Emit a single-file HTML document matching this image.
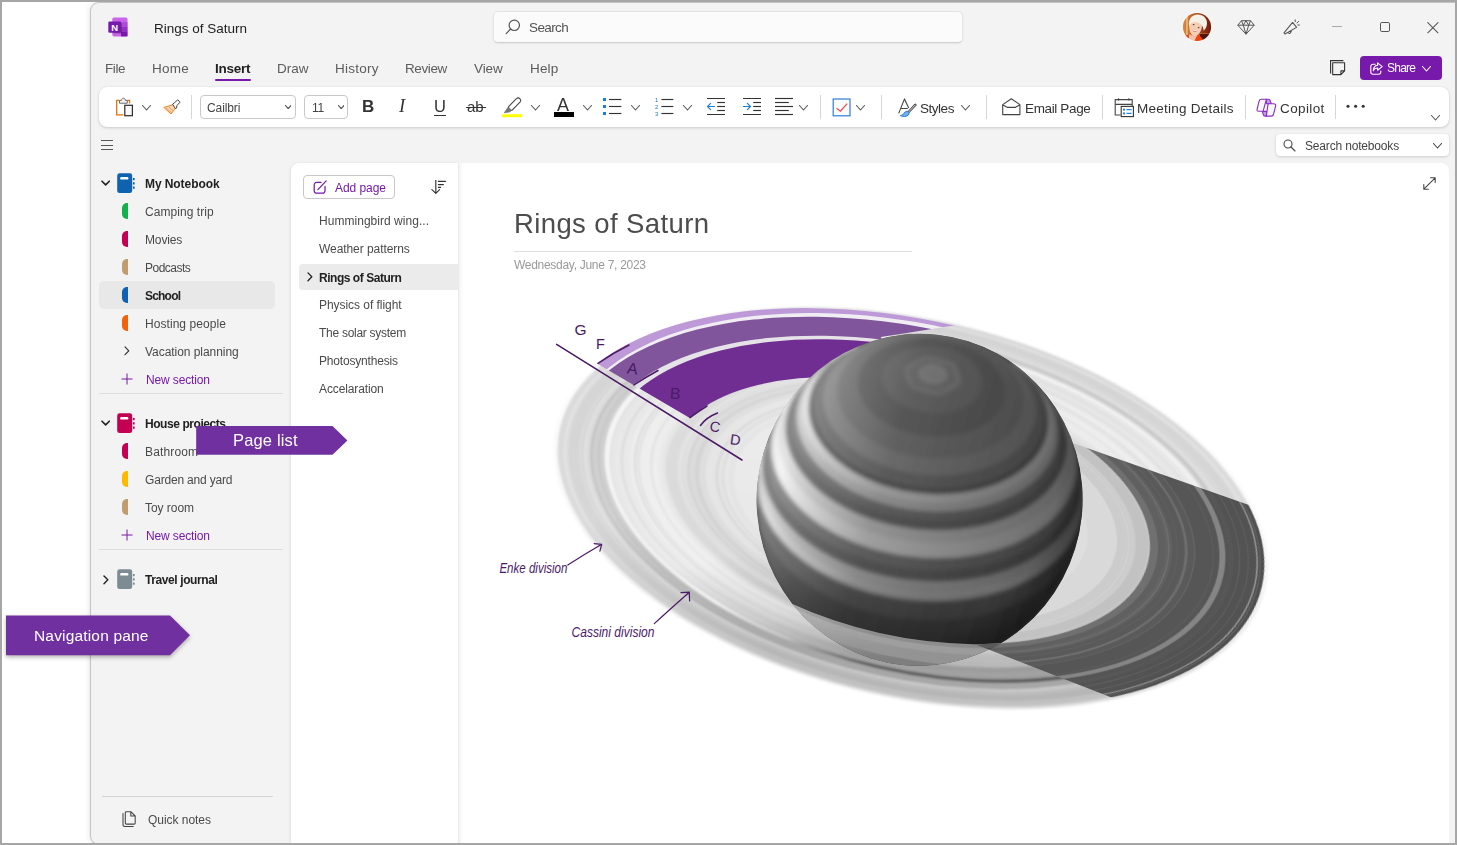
<!DOCTYPE html>
<html lang="en"><head><meta charset="utf-8"><title>Rings of Saturn - OneNote</title>
<style>
html,body{margin:0;padding:0}
html{width:1457px;height:845px;overflow:hidden}
body{width:1457px;height:845px;position:relative;overflow:hidden;background:#fff;font-family:'Liberation Sans',sans-serif}
.a{position:absolute;display:block}
.t{position:absolute;white-space:nowrap;display:block;will-change:transform}
#frame{left:0;top:0;width:1457px;height:845px;box-sizing:border-box;border-style:solid;border-color:#a6a6a6;border-width:2px 2px 2px 2px;z-index:50;pointer-events:none}
#win{left:91px;top:2.5px;width:1365px;height:841px;background:#f3f3f3;border-radius:8px 0 0 8px;box-shadow:0 0 0 1px #c4c4c4, 0 0 6px rgba(0,0,0,.18)}
#ribbon{left:99px;top:87px;width:1350px;height:40px;background:#fff;border-radius:8px;box-shadow:0 1px 3px rgba(0,0,0,.16),0 0 1px rgba(0,0,0,.12)}
#search{left:493px;top:10.6px;width:470px;height:32px;box-sizing:border-box;background:#fbfbfb;border:1px solid #e3e3e3;border-bottom-color:#d0d0d0;border-radius:5px;box-shadow:0 1px 2px rgba(0,0,0,.06)}
#share{left:1360px;top:56px;width:82px;height:24px;background:#7719aa;border-radius:4px}
.box{box-sizing:border-box;border:1px solid #c8c8c8;border-radius:4px;background:#fff}
#pagelist{left:291px;top:163px;width:167.3px;height:680px;background:#fff;border-radius:8px 0 0 0;box-shadow:-1px 0 3px rgba(0,0,0,.08)}
#canvas{left:458px;top:163px;width:991px;height:680px;background:linear-gradient(to right,#e9e9e9 0,#f4f4f4 1.5px,#fbfbfb 3.5px,#fff 6px);border-radius:0 8px 0 0}
.sel{background:#e8e8e8}
.tab{left:0;top:0;width:6.4px;height:16px;border-radius:5px 0 0 5px}
</style></head><body>

<div class="a" id="win"></div>
<header id="titlebar">
<svg class="a" style="left:107.5px;top:17px" width="20" height="20" viewBox="0 0 20 20"><rect x="4.3" y="0.4" width="15.2" height="19" rx="1.6" fill="#ca64ea"/>
<rect x="13" y="5.2" width="6.5" height="4.8" fill="#ae4bd5"/><rect x="13" y="10" width="6.5" height="4.8" fill="#9332bf"/><rect x="13" y="14.8" width="6.5" height="4.6" fill="#7719aa"/>
<rect x="5.3" y="5.5" width="8.5" height="11" rx="1" fill="#000" opacity=".25"/>
<rect x="0.3" y="4.5" width="12.8" height="11.3" rx="1.3" fill="#7719aa"/>
<text x="6.7" y="13.6" font-family="Liberation Sans,sans-serif" font-weight="700" font-size="9.5" fill="#fff" text-anchor="middle">N</text></svg>
<span class="t " style="left:154.2px;top:22.0px;font:400 13.5px/1 'Liberation Sans',sans-serif;color:#222;letter-spacing:-0.004px;">Rings of Saturn</span>
<div class="a" id="search"></div>
<svg class="a" style="left:505px;top:19px" width="17" height="16" viewBox="0 0 17 16"><circle cx="9.3" cy="6.3" r="5.2" fill="none" stroke="#555" stroke-width="1.2"/><path d="M5.6 10 L1.2 14.6" stroke="#555" stroke-width="1.2" stroke-linecap="round"/></svg>
<span class="t " style="left:529.2px;top:21.0px;font:400 13.5px/1 'Liberation Sans',sans-serif;color:#555;letter-spacing:-0.614px;">Search</span>
<svg class="a" style="left:1182px;top:11.8px" width="30" height="30" viewBox="0 0 30 30"><defs><clipPath id="av"><circle cx="15" cy="15" r="14.1"/></clipPath><filter id="avb" x="-10%" y="-10%" width="120%" height="120%"><feGaussianBlur stdDeviation=".55"/></filter>
<linearGradient id="avbg" x1="0" y1="0" x2="1" y2="0"><stop offset="0" stop-color="#d98c4a"/><stop offset=".3" stop-color="#c66a2a"/><stop offset=".62" stop-color="#a03c18"/><stop offset="1" stop-color="#6e180c"/></linearGradient></defs>
<circle cx="15" cy="15" r="14.8" fill="#fff" opacity=".9"/>
<g clip-path="url(#av)"><g filter="url(#avb)"><rect width="30" height="30" fill="url(#avbg)"/>
<rect x="4.2" y="3" width="1.5" height="20" fill="#efc47a"/><rect x="16" y="21.6" width="11" height="1.3" fill="#e89a3a"/>
<path d="M17 22 L30 22 L30 30 L14 30 Z" fill="#4e1208"/>
<path d="M7.2 22 C9 24 13 23.5 15.5 21.5 L18 23 L13 30 L6.5 30 Z" fill="#f0c4aa"/>
<path d="M3 23.5 L7 22.5 L7 30 L3 30 Z" fill="#f4430f"/><path d="M16 21.5 L21 27.5 L20 30 L12 30 Z" fill="#f4430f"/>
<path d="M7 13 C6 8 10 5.5 14 6.5 C19 7.5 21 12 19.5 17 C18.5 21 15 24.5 11.5 23.8 C8.5 23 7.2 18 7 13 Z" fill="#f3cdb6"/>
<path d="M10.6 18 C12.2 19.4 14 19.4 15.2 18.6 C14.4 20.4 11.6 20.6 10.6 18 Z" fill="#c4485a"/><path d="M11 18.2 C12.4 19 13.8 19 14.8 18.6" stroke="#fff" stroke-width=".7" fill="none"/>
<ellipse cx="11.6" cy="12.6" rx="1" ry=".7" fill="#5a4034"/><ellipse cx="16.6" cy="15.6" rx="1" ry=".7" fill="#5a4034"/>
<path d="M7 13.5 C6.5 8 9 3.2 15 2.6 C21 2.2 25.5 6.5 25 12 C24.7 15 23.2 17.4 21.6 18.4 C21.4 15 19.6 12 16.4 10.6 C13.4 9.4 10 10 7 13.5 Z" fill="#f4f1e8"/></g></g></svg>
<svg class="a" style="left:1236.5px;top:20px" width="18" height="15" viewBox="0 0 18 15"><path d="M4.5 0.7 H13.5 L17.2 5.2 L9 14.2 L0.8 5.2 Z M0.8 5.2 H17.2 M4.5 0.7 L6.3 5.2 L9 14.2 L11.7 5.2 L13.5 0.7 M6.3 5.2 L9 0.7 L11.7 5.2" fill="none" stroke="#555" stroke-width="1" stroke-linejoin="round"/></svg>
<svg class="a" style="left:1283px;top:18.5px" width="17" height="17" viewBox="0 0 17 17"><path d="M9.6 3.4 L13.6 8.4 L2 15 L1 13.8 Z M5 13.4 C5.6 15 7.6 15.2 8.6 11.4" fill="none" stroke="#555" stroke-width="1.05" stroke-linejoin="round"/><path d="M12.2 2.6 V0.8 M14 4 L15.6 2.4 M14.8 6 H16.4" stroke="#555" stroke-width="1" stroke-linecap="round"/></svg>
<div class="a" style="left:1332px;top:25.8px;width:10px;height:1.2px;background:#aaa"></div>
<div class="a" style="left:1380px;top:22px;width:10px;height:10px;box-sizing:border-box;border:1.1px solid #555;border-radius:1.8px"></div>
<svg class="a" style="left:1427px;top:21.5px" width="12" height="12" viewBox="0 0 12 12"><path d="M0.8 0.6 L11 10.8 M11 0.6 L0.8 10.8" stroke="#555" stroke-width="1.05" stroke-linecap="round"/></svg>
</header><div id="tabs" role="tablist">
<span class="t " style="left:104.8px;top:62.0px;font:400 13.5px/1 'Liberation Sans',sans-serif;color:#5c5c5c;letter-spacing:-0.383px;">File</span>
<span class="t " style="left:152.1px;top:62.0px;font:400 13.5px/1 'Liberation Sans',sans-serif;color:#5c5c5c;letter-spacing:0.227px;">Home</span>
<span class="t " style="left:214.9px;top:62.0px;font:700 13.5px/1 'Liberation Sans',sans-serif;color:#222;letter-spacing:-0.232px;">Insert</span>
<span class="t " style="left:276.7px;top:62.0px;font:400 13.5px/1 'Liberation Sans',sans-serif;color:#5c5c5c;letter-spacing:-0.012px;">Draw</span>
<span class="t " style="left:334.8px;top:62.0px;font:400 13.5px/1 'Liberation Sans',sans-serif;color:#5c5c5c;letter-spacing:0.234px;">History</span>
<span class="t " style="left:404.6px;top:62.0px;font:400 13.5px/1 'Liberation Sans',sans-serif;color:#5c5c5c;letter-spacing:-0.381px;">Review</span>
<span class="t " style="left:473.8px;top:62.0px;font:400 13.5px/1 'Liberation Sans',sans-serif;color:#5c5c5c;letter-spacing:-0.084px;">View</span>
<span class="t " style="left:529.8px;top:62.0px;font:400 13.5px/1 'Liberation Sans',sans-serif;color:#5c5c5c;letter-spacing:0.143px;">Help</span>
<div class="a" style="left:215.4px;top:78.7px;width:36px;height:2.2px;background:#7719aa;border-radius:1.1px"></div>
<svg class="a" style="left:1330px;top:59.5px" width="16" height="16" viewBox="0 0 16 16"><path d="M0.6 13.4 V0.6 H13.4" fill="none" stroke="#333" stroke-width="1.1"/><path d="M2.7 2.8 H14.6 V10.9 L10.9 14.6 H2.7 Z M14.6 10.9 H10.9 V14.6" fill="#f3f3f3" stroke="#333" stroke-width="1.1" stroke-linejoin="round"/></svg>
<div class="a" id="share"></div>
<svg class="a" style="left:1369.5px;top:61.5px" width="13" height="13" viewBox="0 0 13 13"><path d="M5.2 2.2 H3 A2.2 2.2 0 0 0 0.8 4.4 V10 A2.2 2.2 0 0 0 3 12.2 H8.6 A2.2 2.2 0 0 0 10.8 10 V9" fill="none" stroke="#fff" stroke-width="1.1" stroke-linecap="round"/><path d="M7.6 0.9 L12.2 4.6 L7.6 8.2 V6 C5.4 6 4 7 3.2 8.8 C3.4 5.4 5 3.4 7.6 3.2 Z" fill="none" stroke="#fff" stroke-width="1.1" stroke-linejoin="round"/></svg>
<span class="t " style="left:1387.4px;top:62.4px;font:400 12px/1 'Liberation Sans',sans-serif;color:#fff;letter-spacing:-0.754px;">Share</span>
<svg class="a" style="left:1422px;top:65.7px" width="9" height="6" viewBox="0 0 9 6"><path d="M0.5 0.5 L4.5 5 L8.5 0.5" fill="none" stroke="#fff" stroke-width="1.1" stroke-linecap="round" stroke-linejoin="round"/></svg>
</div><div id="ribbonbar" role="toolbar">
<div class="a" id="ribbon"></div>
<svg class="a" style="left:115px;top:97.4px" width="19" height="20.6" viewBox="0 0 19 20.6"><path d="M4.4 3.3 H1.7 V17.9 H8.4" fill="none" stroke="#e1730c" stroke-width="1.3"/><path d="M12.4 3.3 H14.6 V6.6" fill="none" stroke="#e1730c" stroke-width="1.3"/><path d="M4.5 6.2 V3.4 H6.5 C6.7 0.5 10.1 0.5 10.3 3.4 H12.3 V6.2 Z" fill="#f8f8f8" stroke="#666" stroke-width="1"/><rect x="9.8" y="8.3" width="7.6" height="10.4" fill="#fafafa" stroke="#333" stroke-width="1.25"/></svg>
<svg class="a" style="left:141.9px;top:105px" width="9" height="6" viewBox="0 0 9 6"><path d="M0.5 0.5 L4.5 5 L8.5 0.5" fill="none" stroke="#555" stroke-width="1.1" stroke-linecap="round" stroke-linejoin="round"/></svg>
<svg class="a" style="left:163px;top:99px" width="18" height="16" viewBox="0 0 18 16"><path d="M0.8 8.4 L10.4 5.6 L12.6 9 L8 15 Z" fill="#fbd9b5" stroke="#e8852b" stroke-width="1" stroke-linejoin="round"/><path d="M3 9 L9 14 M6 8 L10.4 11.8" stroke="#e8852b" stroke-width=".7"/><path d="M9.6 5.2 L11.4 3.8 L14.8 0.8 L17 3.2 L14 6.4 L13.6 9 L12.4 9.6 Z" fill="#fff" stroke="#444" stroke-width="1" stroke-linejoin="round"/></svg>
<div class="a" style="left:190.9px;top:95px;width:1px;height:23.5px;background:#d6d6d6"></div>
<div class="a box" style="left:200px;top:95px;width:96px;height:23.5px"></div>
<span class="t " style="left:207.3px;top:102.0px;font:400 12px/1 'Liberation Sans',sans-serif;color:#444;letter-spacing:-0.101px;">Cailbri</span>
<svg class="a" style="left:285px;top:104.5px" width="6.4" height="4.6" viewBox="0 0 6.4 4.6"><path d="M0.5 0.5 L3.2 3.6 L5.9 0.5" fill="none" stroke="#444" stroke-width="1.1" stroke-linecap="round" stroke-linejoin="round"/></svg>
<div class="a box" style="left:304px;top:95px;width:44px;height:23.5px"></div>
<span class="t " style="left:312.3px;top:102.0px;font:400 12px/1 'Liberation Sans',sans-serif;color:#444;letter-spacing:-0.4px;">11</span>
<svg class="a" style="left:338px;top:104.5px" width="6.4" height="4.6" viewBox="0 0 6.4 4.6"><path d="M0.5 0.5 L3.2 3.6 L5.9 0.5" fill="none" stroke="#444" stroke-width="1.1" stroke-linecap="round" stroke-linejoin="round"/></svg>
<span class="t " style="left:361.9px;top:98.3px;font:700 17px/1 'Liberation Sans',sans-serif;color:#333;">B</span>
<span class="t " style="left:399.1px;top:97.4px;font:italic 400 18.5px/1 'Liberation Serif',serif;color:#333;">I</span>
<span class="t " style="left:433.7px;top:97.6px;font:400 16.5px/1 'Liberation Sans',sans-serif;color:#333;">U</span>
<div class="a" style="left:434px;top:115px;width:12px;height:1.1px;background:#333"></div>
<span class="t " style="left:467.0px;top:99.4px;font:400 15px/1 'Liberation Sans',sans-serif;color:#333;">ab</span>
<div class="a" style="left:466px;top:107.3px;width:20px;height:1.1px;background:#333"></div>
<svg class="a" style="left:502px;top:97px" width="21" height="21" viewBox="0 0 21 21"><path d="M6.6 9.6 L14.4 1.6 C15.6 0.6 17 0.8 18 1.8 C19 2.8 19 4.2 18 5.2 L10.2 13.2 L6 13.8 Z" fill="#fff" stroke="#444" stroke-width="1.05" stroke-linejoin="round"/><path d="M6.3 10 L2.2 15.8 L7.4 15 L9.8 13.3 Z" fill="#777" stroke="#666" stroke-width=".6"/><rect x="0" y="17.2" width="20" height="3" fill="#ffff00"/></svg>
<svg class="a" style="left:531.3px;top:105px" width="9" height="6" viewBox="0 0 9 6"><path d="M0.5 0.5 L4.5 5 L8.5 0.5" fill="none" stroke="#555" stroke-width="1.1" stroke-linecap="round" stroke-linejoin="round"/></svg>
<span class="t " style="left:556.9px;top:95.8px;font:400 18px/1 'Liberation Sans',sans-serif;color:#333;">A</span>
<div class="a" style="left:554px;top:112.2px;width:20px;height:4.8px;background:#000"></div>
<svg class="a" style="left:583px;top:105px" width="9" height="6" viewBox="0 0 9 6"><path d="M0.5 0.5 L4.5 5 L8.5 0.5" fill="none" stroke="#555" stroke-width="1.1" stroke-linecap="round" stroke-linejoin="round"/></svg>
<svg class="a" style="left:603px;top:97px" width="19" height="19" viewBox="0 0 19 19"><rect x="0" y="1.0" width="3" height="3" fill="#1e7fd0"/><path d="M6 2.5 H18.4" stroke="#333" stroke-width="1.15"/><rect x="0" y="8.0" width="3" height="3" fill="#1e7fd0"/><path d="M6 9.5 H18.4" stroke="#333" stroke-width="1.15"/><rect x="0" y="15.0" width="3" height="3" fill="#1e7fd0"/><path d="M6 16.5 H18.4" stroke="#333" stroke-width="1.15"/></svg>
<svg class="a" style="left:631px;top:105px" width="9" height="6" viewBox="0 0 9 6"><path d="M0.5 0.5 L4.5 5 L8.5 0.5" fill="none" stroke="#555" stroke-width="1.1" stroke-linecap="round" stroke-linejoin="round"/></svg>
<svg class="a" style="left:654.6px;top:97px" width="19" height="20" viewBox="0 0 19 20"><text x="0" y="4.7" font-size="6" font-family="Liberation Sans,sans-serif" fill="#1e7fd0">1</text><path d="M6.4 2.5 H18.4" stroke="#333" stroke-width="1.15"/><text x="0" y="11.7" font-size="6" font-family="Liberation Sans,sans-serif" fill="#1e7fd0">2</text><path d="M6.4 9.5 H18.4" stroke="#333" stroke-width="1.15"/><text x="0" y="18.7" font-size="6" font-family="Liberation Sans,sans-serif" fill="#1e7fd0">3</text><path d="M6.4 16.5 H18.4" stroke="#333" stroke-width="1.15"/></svg>
<svg class="a" style="left:683px;top:105px" width="9" height="6" viewBox="0 0 9 6"><path d="M0.5 0.5 L4.5 5 L8.5 0.5" fill="none" stroke="#555" stroke-width="1.1" stroke-linecap="round" stroke-linejoin="round"/></svg>
<svg class="a" style="left:707px;top:97px" width="18" height="19" viewBox="0 0 18 19"><path d="M0 1.5 H18 M0 17.5 H18" stroke="#333" stroke-width="1.15"/><path d="M10.2 5.5 H18" stroke="#333" stroke-width="1.15"/><path d="M10.2 9.5 H18" stroke="#333" stroke-width="1.15"/><path d="M10.2 13.5 H18" stroke="#333" stroke-width="1.15"/><path d="M0.6 9.5 H7.6 M3.6 6.4 L0.6 9.5 L3.6 12.6" fill="none" stroke="#1e7fd0" stroke-width="1.15" stroke-linecap="round" stroke-linejoin="round"/></svg>
<svg class="a" style="left:743px;top:97px" width="18" height="19" viewBox="0 0 18 19"><path d="M0 1.5 H18 M0 17.5 H18" stroke="#333" stroke-width="1.15"/><path d="M10.2 5.5 H18" stroke="#333" stroke-width="1.15"/><path d="M10.2 9.5 H18" stroke="#333" stroke-width="1.15"/><path d="M10.2 13.5 H18" stroke="#333" stroke-width="1.15"/><path d="M0.4 9.5 H7.4 M4.4 6.4 L7.4 9.5 L4.4 12.6" fill="none" stroke="#1e7fd0" stroke-width="1.15" stroke-linecap="round" stroke-linejoin="round"/></svg>
<svg class="a" style="left:775px;top:97px" width="18" height="19" viewBox="0 0 18 19"><path d="M0 1.5 H18" stroke="#333" stroke-width="1.15"/><path d="M0 5.5 H13.8" stroke="#333" stroke-width="1.15"/><path d="M0 9.5 H18" stroke="#333" stroke-width="1.15"/><path d="M0 13.5 H13.8" stroke="#333" stroke-width="1.15"/><path d="M0 17.5 H18" stroke="#333" stroke-width="1.15"/></svg>
<svg class="a" style="left:799.2px;top:105px" width="9" height="6" viewBox="0 0 9 6"><path d="M0.5 0.5 L4.5 5 L8.5 0.5" fill="none" stroke="#555" stroke-width="1.1" stroke-linecap="round" stroke-linejoin="round"/></svg>
<div class="a" style="left:820.1px;top:95px;width:1px;height:23.5px;background:#d6d6d6"></div>
<svg class="a" style="left:831.5px;top:97.5px" width="19" height="19" viewBox="0 0 19 19"><rect x="1.2" y="1" width="16.8" height="16.8" fill="#fafafa" stroke="#2b7fd6" stroke-width="1.2"/><path d="M4.6 10.3 L8.4 13.2 L15.2 5.6" fill="none" stroke="#e8484a" stroke-width="1.25"/></svg>
<svg class="a" style="left:856px;top:105px" width="9" height="6" viewBox="0 0 9 6"><path d="M0.5 0.5 L4.5 5 L8.5 0.5" fill="none" stroke="#555" stroke-width="1.1" stroke-linecap="round" stroke-linejoin="round"/></svg>
<div class="a" style="left:880.8px;top:95px;width:1px;height:23.5px;background:#d6d6d6"></div>
<svg class="a" style="left:898px;top:98px" width="19" height="20" viewBox="0 0 19 20"><path d="M0.7 15.4 L6.5 0.9 L10.7 10 M2.5 10.5 H9.8" fill="none" stroke="#444" stroke-width="1.1" stroke-linejoin="round"/><path d="M17.3 6.9 L10.6 14" stroke="#444" stroke-width="2.5" stroke-linecap="round"/><path d="M17.1 7.1 L10.9 13.7" stroke="#fff" stroke-width=".8" stroke-linecap="round"/><path d="M2.3 17.6 C5.6 17.4 5.8 13.6 9 13.2 C11.4 13.4 11.6 15.6 10.4 17 C8.6 18.9 4.8 19 2.3 17.6 Z" fill="#6cb0ee" stroke="#2576cf" stroke-width=".9"/></svg>
<span class="t " style="left:920.1px;top:101.8px;font:400 13.5px/1 'Liberation Sans',sans-serif;color:#333;letter-spacing:-0.472px;">Styles</span>
<svg class="a" style="left:961.3px;top:105px" width="9" height="6" viewBox="0 0 9 6"><path d="M0.5 0.5 L4.5 5 L8.5 0.5" fill="none" stroke="#555" stroke-width="1.1" stroke-linecap="round" stroke-linejoin="round"/></svg>
<div class="a" style="left:985.9px;top:95px;width:1px;height:23.5px;background:#d6d6d6"></div>
<svg class="a" style="left:1001.5px;top:97.6px" width="19" height="18" viewBox="0 0 19 18"><path d="M0.7 6.6 L9.3 0.7 L17.9 6.6 V16.6 H0.7 Z" fill="none" stroke="#444" stroke-width="1.1" stroke-linejoin="round"/><path d="M0.9 6.9 L5.6 9.4 H13 L17.7 6.9" fill="none" stroke="#444" stroke-width="1.1" stroke-linejoin="round"/></svg>
<span class="t " style="left:1025.3px;top:101.8px;font:400 13.5px/1 'Liberation Sans',sans-serif;color:#333;letter-spacing:-0.360px;">Email Page</span>
<div class="a" style="left:1101.9px;top:95px;width:1px;height:23.5px;background:#d6d6d6"></div>
<svg class="a" style="left:1113.5px;top:98px" width="20" height="20" viewBox="0 0 20 20"><path d="M6.6 17 H1.2 V1.6 H18.2 V8" fill="none" stroke="#444" stroke-width="1.1"/><path d="M1.2 6.4 H18.2 M4.6 0.2 V2.6 M14.8 0.2 V2.6" stroke="#444" stroke-width="1.1"/><rect x="7.2" y="8.4" width="12.2" height="10.2" fill="#fff" stroke="#333" stroke-width="1.1"/><rect x="9" y="10.6" width="2" height="2" fill="#2b88d8"/><rect x="9" y="14.4" width="2" height="2" fill="#2b88d8"/><path d="M12.4 11.6 H17.6 M12.4 15.4 H17.6" stroke="#2b88d8" stroke-width="1.2"/></svg>
<span class="t " style="left:1137.0px;top:101.8px;font:400 13.5px/1 'Liberation Sans',sans-serif;color:#333;letter-spacing:0.240px;">Meeting Details</span>
<div class="a" style="left:1245.1px;top:95px;width:1px;height:23.5px;background:#d6d6d6"></div>
<svg class="a" style="left:1255.5px;top:97.5px" width="21" height="19" viewBox="0 0 21 19"><g stroke="#8b2bc6" stroke-width="1.1" stroke-linejoin="round"><path d="M10.4 1.2 H12.6 Q13.8 1.3 14.2 2.6 L15.3 5.8 H10.2 Z" fill="#c39be0"/><path d="M6.3 13.4 H11 L10.4 18.1 H9 Q7.6 18 7.3 16.6 Z" fill="#c39be0"/><path d="M5.2 1.2 H10.4 L7.1 13.3 H2.6 Q0.6 13.3 1.1 11.2 L3.1 3.2 Q3.6 1.2 5.2 1.2 Z" fill="#f8f8f8"/><path d="M12.1 5.8 H17.6 Q20.2 5.8 19.6 8.2 L17.6 16 Q17 18.1 15.4 18.1 H10.4 L11 13.4 Z" fill="#f8f8f8"/></g></svg>
<span class="t " style="left:1280.1px;top:101.8px;font:400 13.5px/1 'Liberation Sans',sans-serif;color:#333;letter-spacing:0.379px;">Copilot</span>
<div class="a" style="left:1335.1px;top:95px;width:1px;height:23.5px;background:#d6d6d6"></div>
<svg class="a" style="left:1345px;top:103px" width="21" height="7" viewBox="0 0 21 7"><circle cx="3" cy="3.3" r="1.55" fill="#333"/><circle cx="10.599999999999909" cy="3.3" r="1.55" fill="#333"/><circle cx="18.200000000000045" cy="3.3" r="1.55" fill="#333"/></svg>
<svg class="a" style="left:1430.5px;top:115px" width="9" height="6" viewBox="0 0 9 6"><path d="M0.5 0.5 L4.5 5 L8.5 0.5" fill="none" stroke="#555" stroke-width="1.1" stroke-linecap="round" stroke-linejoin="round"/></svg>
</div><nav id="navpane">
<div class="a" style="left:101px;top:140px;width:12px;height:1px;background:#555"></div>
<div class="a" style="left:101px;top:144.5px;width:12px;height:1px;background:#555"></div>
<div class="a" style="left:101px;top:149px;width:12px;height:1px;background:#555"></div>
<div class="a" style="left:1276px;top:134px;width:173px;height:22px;background:#fff;border-radius:4px;box-shadow:0 1px 3px rgba(0,0,0,.14),0 0 1px rgba(0,0,0,.1)"></div>
<svg class="a" style="left:1283px;top:139px" width="13" height="13" viewBox="0 0 13 13"><circle cx="5" cy="5" r="4" fill="none" stroke="#444" stroke-width="1.1"/><path d="M8 8 L12 12" stroke="#444" stroke-width="1.1" stroke-linecap="round"/></svg>
<span class="t " style="left:1305.1px;top:139.8px;font:400 12px/1 'Liberation Sans',sans-serif;color:#444;letter-spacing:-0.169px;">Search notebooks</span>
<svg class="a" style="left:1433px;top:143px" width="9" height="6" viewBox="0 0 9 6"><path d="M0.5 0.5 L4.5 5 L8.5 0.5" fill="none" stroke="#444" stroke-width="1.1" stroke-linecap="round" stroke-linejoin="round"/></svg>
<div class="a sel" style="left:99px;top:281px;width:176px;height:28px;border-radius:5px"></div>
<svg class="a" style="left:100.5px;top:180.4px" width="9.6" height="6.6" viewBox="0 0 9.6 6.6"><path d="M1 1.2 L4.65 4.9 L8.3 1.2" fill="none" stroke="#222" stroke-width="1.6" stroke-linecap="round" stroke-linejoin="round"/></svg>
<svg class="a" style="left:117px;top:173px" width="19" height="21" viewBox="0 0 19 21"><rect x="0.2" y="0.3" width="15" height="19.8" rx="2.4" fill="#0f62b0"/><rect x="3.2" y="4" width="8.2" height="2.6" rx="1.2" fill="#fff"/><path d="M16.8 5.1 V15.8" stroke="#0f62b0" stroke-width="1.7" stroke-dasharray="2.2 2"/></svg>
<span class="t " style="left:144.9px;top:178.0px;font:700 12px/1 'Liberation Sans',sans-serif;color:#222;letter-spacing:-0.076px;">My Notebook</span>
<div class="a tab" style="left:121.8px;top:203px;background:#13b14b"></div>
<span class="t " style="left:144.9px;top:206.0px;font:400 12px/1 'Liberation Sans',sans-serif;color:#4a4a4a;letter-spacing:0.052px;">Camping trip</span>
<div class="a tab" style="left:121.8px;top:231px;background:#c30052"></div>
<span class="t " style="left:144.9px;top:234.0px;font:400 12px/1 'Liberation Sans',sans-serif;color:#4a4a4a;letter-spacing:-0.143px;">Movies</span>
<div class="a tab" style="left:121.8px;top:259px;background:#c19c6e"></div>
<span class="t " style="left:144.9px;top:262.0px;font:400 12px/1 'Liberation Sans',sans-serif;color:#4a4a4a;letter-spacing:-0.508px;">Podcasts</span>
<div class="a tab" style="left:121.8px;top:287px;background:#0f62b0"></div>
<span class="t " style="left:144.9px;top:290.0px;font:700 12px/1 'Liberation Sans',sans-serif;color:#222;letter-spacing:-0.802px;">School</span>
<div class="a tab" style="left:121.8px;top:315px;background:#f2610c"></div>
<span class="t " style="left:144.9px;top:318.0px;font:400 12px/1 'Liberation Sans',sans-serif;color:#4a4a4a;letter-spacing:0.058px;">Hosting people</span>
<svg class="a" style="left:123.6px;top:346.4px" width="6" height="10" viewBox="0 0 6 10"><path d="M1 0.9 L4.8 4.8 L1 8.7" fill="none" stroke="#333" stroke-width="1.2" stroke-linecap="round" stroke-linejoin="round"/></svg>
<span class="t " style="left:144.9px;top:346.0px;font:400 12px/1 'Liberation Sans',sans-serif;color:#4a4a4a;letter-spacing:-0.051px;">Vacation planning</span>
<svg class="a" style="left:120.5px;top:373.4px" width="12" height="12" viewBox="0 0 12 12"><path d="M6 0.5 V11.5 M0.5 6 H11.5" stroke="#7719aa" stroke-width="1"/></svg>
<span class="t " style="left:145.9px;top:374.0px;font:400 12px/1 'Liberation Sans',sans-serif;color:#7719aa;letter-spacing:-0.136px;">New section</span>
<div class="a" style="left:99px;top:392.5px;width:184px;height:1px;background:#dedede"></div>
<svg class="a" style="left:100.5px;top:420.4px" width="9.6" height="6.6" viewBox="0 0 9.6 6.6"><path d="M1 1.2 L4.65 4.9 L8.3 1.2" fill="none" stroke="#222" stroke-width="1.6" stroke-linecap="round" stroke-linejoin="round"/></svg>
<svg class="a" style="left:117px;top:413px" width="19" height="21" viewBox="0 0 19 21"><rect x="0.2" y="0.3" width="15" height="19.8" rx="2.4" fill="#c30052"/><rect x="3.2" y="4" width="8.2" height="2.6" rx="1.2" fill="#fff"/><path d="M16.8 5.1 V15.8" stroke="#c30052" stroke-width="1.7" stroke-dasharray="2.2 2"/></svg>
<span class="t " style="left:144.9px;top:418.0px;font:700 12px/1 'Liberation Sans',sans-serif;color:#222;letter-spacing:-0.438px;">House projects</span>
<div class="a tab" style="left:121.8px;top:443px;background:#c30052"></div>
<span class="t " style="left:144.9px;top:446.0px;font:400 12px/1 'Liberation Sans',sans-serif;color:#4a4a4a;letter-spacing:0.140px;">Bathroom</span>
<div class="a tab" style="left:121.8px;top:471px;background:#ffb900"></div>
<span class="t " style="left:144.9px;top:474.0px;font:400 12px/1 'Liberation Sans',sans-serif;color:#4a4a4a;letter-spacing:-0.183px;">Garden and yard</span>
<div class="a tab" style="left:121.8px;top:499px;background:#c19c6e"></div>
<span class="t " style="left:144.9px;top:502.0px;font:400 12px/1 'Liberation Sans',sans-serif;color:#4a4a4a;letter-spacing:-0.049px;">Toy room</span>
<svg class="a" style="left:120.5px;top:529.4px" width="12" height="12" viewBox="0 0 12 12"><path d="M6 0.5 V11.5 M0.5 6 H11.5" stroke="#7719aa" stroke-width="1"/></svg>
<span class="t " style="left:145.9px;top:530.0px;font:400 12px/1 'Liberation Sans',sans-serif;color:#7719aa;letter-spacing:-0.136px;">New section</span>
<div class="a" style="left:99px;top:548.5px;width:184px;height:1px;background:#dedede"></div>
<svg class="a" style="left:102.6px;top:574.8px" width="6" height="10" viewBox="0 0 6 10"><path d="M1 0.9 L4.8 4.8 L1 8.7" fill="none" stroke="#222" stroke-width="1.4" stroke-linecap="round" stroke-linejoin="round"/></svg>
<svg class="a" style="left:117px;top:569px" width="19" height="21" viewBox="0 0 19 21"><rect x="0.2" y="0.3" width="15" height="19.8" rx="2.4" fill="#7d8b92"/><rect x="3.2" y="4" width="8.2" height="2.6" rx="1.2" fill="#fff"/><path d="M16.8 5.1 V15.8" stroke="#7d8b92" stroke-width="1.7" stroke-dasharray="2.2 2"/></svg>
<span class="t " style="left:144.9px;top:574.0px;font:700 12px/1 'Liberation Sans',sans-serif;color:#222;letter-spacing:-0.402px;">Travel journal</span>
<div class="a" style="left:101.5px;top:796px;width:171px;height:1px;background:#d4d4d4"></div>
<svg class="a" style="left:121.5px;top:811px" width="14.5" height="16.5" viewBox="0 0 14.5 16.5"><path d="M4.4 0.7 H8.8 L13.2 5 V12 Q13.2 13.1 12.1 13.1 H4.4 Q3.3 13.1 3.3 12 V1.8 Q3.3 0.7 4.4 0.7 Z M8.8 0.7 V5 H13.2" fill="none" stroke="#444" stroke-width="1.05" stroke-linejoin="round"/><path d="M1 2.6 V13.4 Q1 15.4 3 15.4 H11.2" fill="none" stroke="#444" stroke-width="1.05" stroke-linecap="round"/></svg>
<span class="t " style="left:147.5px;top:813.5px;font:400 12px/1 'Liberation Sans',sans-serif;color:#4a4a4a;letter-spacing:-0.036px;">Quick notes</span>
</nav><section id="pages">
<div class="a" id="canvas"></div>
<div class="a" id="pagelist"></div>
<div class="a box" style="left:303px;top:175px;width:91.5px;height:23.5px"></div>
<svg class="a" style="left:312.5px;top:179.5px" width="15" height="15" viewBox="0 0 15 15"><path d="M8 2.4 H3.6 A2.4 2.4 0 0 0 1.2 4.8 V10.8 A2.4 2.4 0 0 0 3.6 13.2 H9.6 A2.4 2.4 0 0 0 12 10.8 V6.4" fill="none" stroke="#7719aa" stroke-width="1.25" stroke-linecap="round"/><path d="M4.9 9.6 L13.2 0.9" stroke="#7719aa" stroke-width="1.25" stroke-linecap="round"/></svg>
<span class="t " style="left:334.9px;top:181.6px;font:400 12px/1 'Liberation Sans',sans-serif;color:#7719aa;letter-spacing:-0.055px;">Add page</span>
<svg class="a" style="left:430.5px;top:180px" width="16" height="14.5" viewBox="0 0 16 14.5"><path d="M4.8 0.2 V13.2 M0.9 9.6 L4.8 13.3 L8.6 9.6" fill="none" stroke="#333" stroke-width="1.15" stroke-linecap="round" stroke-linejoin="round"/><path d="M7.4 1.4 H14.4 M7.4 4.6 H12.4 M7.4 7.4 H9.6" stroke="#333" stroke-width="1.15" stroke-linecap="round"/></svg>
<div class="a sel" style="left:299px;top:264px;width:159px;height:26px;border-radius:4px 0 0 4px;background:#ebebeb"></div>
<span class="t " style="left:318.8px;top:214.7px;font:400 12px/1 'Liberation Sans',sans-serif;color:#4a4a4a;letter-spacing:0.035px;">Hummingbird wing...</span>
<span class="t " style="left:318.8px;top:242.8px;font:400 12px/1 'Liberation Sans',sans-serif;color:#4a4a4a;letter-spacing:-0.068px;">Weather patterns</span>
<span class="t " style="left:318.8px;top:271.5px;font:700 12px/1 'Liberation Sans',sans-serif;color:#222;letter-spacing:-0.466px;">Rings of Saturn</span>
<span class="t " style="left:318.8px;top:299.0px;font:400 12px/1 'Liberation Sans',sans-serif;color:#4a4a4a;letter-spacing:-0.048px;">Physics of flight</span>
<span class="t " style="left:318.8px;top:327.0px;font:400 12px/1 'Liberation Sans',sans-serif;color:#4a4a4a;letter-spacing:-0.277px;">The solar system</span>
<span class="t " style="left:318.8px;top:355.0px;font:400 12px/1 'Liberation Sans',sans-serif;color:#4a4a4a;letter-spacing:-0.183px;">Photosynthesis</span>
<span class="t " style="left:318.8px;top:383.0px;font:400 12px/1 'Liberation Sans',sans-serif;color:#4a4a4a;letter-spacing:-0.121px;">Accelaration</span>
<svg class="a" style="left:306.6px;top:272.4px" width="6" height="10" viewBox="0 0 6 10"><path d="M1 0.9 L4.8 4.8 L1 8.7" fill="none" stroke="#222" stroke-width="1.3" stroke-linecap="round" stroke-linejoin="round"/></svg>
</section><main id="page">
<svg class="a" style="left:1422.5px;top:176.5px" width="13" height="13" viewBox="0 0 13 13"><path d="M7.6 0.8 H12.2 V5.4 M12.2 0.8 L0.8 12.2 M0.8 7.6 V12.2 H5.4" fill="none" stroke="#444" stroke-width="1.05" stroke-linecap="round" stroke-linejoin="round"/></svg>
<span class="t " style="left:513.8px;top:210.1px;font:400 27.5px/1 'Liberation Sans',sans-serif;color:#4d4d4d;letter-spacing:0.389px;">Rings of Saturn</span>
<div class="a" style="left:514px;top:250.5px;width:398px;height:1px;background:#e1e1e1"></div>
<span class="t " style="left:513.7px;top:259.2px;font:400 12px/1 'Liberation Sans',sans-serif;color:#999;letter-spacing:-0.287px;">Wednesday, June 7, 2023</span>
<svg class="a" id="saturn" style="left:480px;top:290px" width="820" height="440" viewBox="480 290 820 440">
<defs><linearGradient id="gFade_1006" gradientUnits="userSpaceOnUse" x1="-110.7" y1="-362.0" x2="110.7" y2="362.0"><stop offset="0" stop-color="#ffffff"/><stop offset="0.58" stop-color="#f8f8f8"/><stop offset="0.76" stop-color="#eeeeee"/><stop offset="0.9" stop-color="#e4e4e4"/><stop offset="1" stop-color="#e4e4e4"/></linearGradient><linearGradient id="gAo_991" gradientUnits="userSpaceOnUse" x1="-109.0" y1="-356.6" x2="109.0" y2="356.6"><stop offset="0" stop-color="#d9d9d9"/><stop offset="0.58" stop-color="#dcdcdc"/><stop offset="0.76" stop-color="#d1d1d1"/><stop offset="0.9" stop-color="#c6c6c6"/><stop offset="1" stop-color="#c6c6c6"/></linearGradient><linearGradient id="gEn_980" gradientUnits="userSpaceOnUse" x1="-107.8" y1="-352.6" x2="107.8" y2="352.6"><stop offset="0" stop-color="#efefef"/><stop offset="0.58" stop-color="#eaeaea"/><stop offset="0.76" stop-color="#d3d3d3"/><stop offset="0.9" stop-color="#bcbcbc"/><stop offset="1" stop-color="#bcbcbc"/></linearGradient><linearGradient id="gA_972" gradientUnits="userSpaceOnUse" x1="-106.9" y1="-349.7" x2="106.9" y2="349.7"><stop offset="0" stop-color="#d3d3d3"/><stop offset="0.58" stop-color="#d7d7d7"/><stop offset="0.76" stop-color="#c6c6c6"/><stop offset="0.9" stop-color="#b6b6b6"/><stop offset="1" stop-color="#b6b6b6"/></linearGradient><linearGradient id="gA_961" gradientUnits="userSpaceOnUse" x1="-105.8" y1="-345.9" x2="105.8" y2="345.9"><stop offset="0" stop-color="#d3d3d3"/><stop offset="0.58" stop-color="#d7d7d7"/><stop offset="0.76" stop-color="#c6c6c6"/><stop offset="0.9" stop-color="#b6b6b6"/><stop offset="1" stop-color="#b6b6b6"/></linearGradient><linearGradient id="gA_936" gradientUnits="userSpaceOnUse" x1="-103.0" y1="-336.8" x2="103.0" y2="336.8"><stop offset="0" stop-color="#d3d3d3"/><stop offset="0.58" stop-color="#d7d7d7"/><stop offset="0.76" stop-color="#c6c6c6"/><stop offset="0.9" stop-color="#b6b6b6"/><stop offset="1" stop-color="#b6b6b6"/></linearGradient><linearGradient id="gA2_896" gradientUnits="userSpaceOnUse" x1="-98.6" y1="-322.7" x2="98.6" y2="322.7"><stop offset="0" stop-color="#cecece"/><stop offset="0.58" stop-color="#d0d0d0"/><stop offset="0.76" stop-color="#bcbcbc"/><stop offset="0.9" stop-color="#a8a8a8"/><stop offset="1" stop-color="#a8a8a8"/></linearGradient><linearGradient id="gCa_870" gradientUnits="userSpaceOnUse" x1="-95.7" y1="-313.1" x2="95.7" y2="313.1"><stop offset="0" stop-color="#f6f6f6"/><stop offset="0.8" stop-color="#f2f2f2"/><stop offset="0.89" stop-color="#c4c4c4"/><stop offset="0.95" stop-color="#5a5a5a"/><stop offset="1" stop-color="#5a5a5a"/></linearGradient><linearGradient id="gB1_831" gradientUnits="userSpaceOnUse" x1="-91.4" y1="-299.0" x2="91.4" y2="299.0"><stop offset="0" stop-color="#e6e6e6"/><stop offset="0.72" stop-color="#ebebeb"/><stop offset="0.86" stop-color="#cdcdcd"/><stop offset="0.95" stop-color="#a0a0a0"/><stop offset="1" stop-color="#a0a0a0"/></linearGradient><linearGradient id="gB2_770" gradientUnits="userSpaceOnUse" x1="-84.7" y1="-277.0" x2="84.7" y2="277.0"><stop offset="0" stop-color="#ececec"/><stop offset="0.72" stop-color="#f0f0f0"/><stop offset="0.86" stop-color="#dbdbdb"/><stop offset="0.95" stop-color="#bcbcbc"/><stop offset="1" stop-color="#bcbcbc"/></linearGradient><linearGradient id="gB3_722" gradientUnits="userSpaceOnUse" x1="-79.5" y1="-260.0" x2="79.5" y2="260.0"><stop offset="0" stop-color="#eaeaea"/><stop offset="0.72" stop-color="#eeeeee"/><stop offset="0.86" stop-color="#dfdfdf"/><stop offset="0.95" stop-color="#c8c8c8"/><stop offset="1" stop-color="#c8c8c8"/></linearGradient><linearGradient id="gB4_695" gradientUnits="userSpaceOnUse" x1="-76.5" y1="-250.1" x2="76.5" y2="250.1"><stop offset="0" stop-color="#e4e4e4"/><stop offset="0.72" stop-color="#e6e6e6"/><stop offset="0.86" stop-color="#d0d0d0"/><stop offset="0.95" stop-color="#b0b0b0"/><stop offset="1" stop-color="#b0b0b0"/></linearGradient><linearGradient id="gC_662" gradientUnits="userSpaceOnUse" x1="-72.9" y1="-238.4" x2="72.9" y2="238.4"><stop offset="0" stop-color="#dedede"/><stop offset="0.72" stop-color="#dadada"/><stop offset="0.86" stop-color="#c6c6c6"/><stop offset="0.95" stop-color="#a8a8a8"/><stop offset="1" stop-color="#a8a8a8"/></linearGradient><linearGradient id="gC2_611" gradientUnits="userSpaceOnUse" x1="-67.3" y1="-220.0" x2="67.3" y2="220.0"><stop offset="0" stop-color="#dcdcdc"/><stop offset="0.72" stop-color="#d8d8d8"/><stop offset="0.86" stop-color="#cacaca"/><stop offset="0.95" stop-color="#b4b4b4"/><stop offset="1" stop-color="#b4b4b4"/></linearGradient><linearGradient id="gD_541" gradientUnits="userSpaceOnUse" x1="-59.6" y1="-194.8" x2="59.6" y2="194.8"><stop offset="0" stop-color="#e6e6e6"/><stop offset="0.72" stop-color="#e3e3e3"/><stop offset="0.86" stop-color="#d7d7d7"/><stop offset="0.95" stop-color="#c4c4c4"/><stop offset="1" stop-color="#c4c4c4"/></linearGradient><linearGradient id="gIn_450" gradientUnits="userSpaceOnUse" x1="-49.5" y1="-161.9" x2="49.5" y2="161.9"><stop offset="0" stop-color="#ececec"/><stop offset="0.72" stop-color="#e8e8e8"/><stop offset="0.86" stop-color="#e0e0e0"/><stop offset="0.95" stop-color="#d4d4d4"/><stop offset="1" stop-color="#d4d4d4"/></linearGradient><linearGradient id="pg60" gradientUnits="userSpaceOnUse" x1="-163.0" y1="-30" x2="163.0" y2="35"><stop offset="0" stop-color="#6e6e6e"/><stop offset="0.07" stop-color="#6c6c6c"/><stop offset="0.2" stop-color="#595959"/><stop offset="0.38" stop-color="#434343"/><stop offset="0.55" stop-color="#3c3c3c"/><stop offset="0.8" stop-color="#323232"/><stop offset="1" stop-color="#252525"/></linearGradient><linearGradient id="pg70" gradientUnits="userSpaceOnUse" x1="-163.0" y1="-30" x2="163.0" y2="35"><stop offset="0" stop-color="#7d7d7d"/><stop offset="0.07" stop-color="#7c7c7c"/><stop offset="0.2" stop-color="#676767"/><stop offset="0.38" stop-color="#4e4e4e"/><stop offset="0.55" stop-color="#464646"/><stop offset="0.8" stop-color="#3b3b3b"/><stop offset="1" stop-color="#2b2b2b"/></linearGradient><linearGradient id="pg130" gradientUnits="userSpaceOnUse" x1="-163.0" y1="-30" x2="163.0" y2="35"><stop offset="0" stop-color="#d7d7d7"/><stop offset="0.07" stop-color="#e0e0e0"/><stop offset="0.2" stop-color="#bdbdbd"/><stop offset="0.38" stop-color="#929292"/><stop offset="0.55" stop-color="#828282"/><stop offset="0.8" stop-color="#6d6d6d"/><stop offset="1" stop-color="#515151"/></linearGradient><linearGradient id="pg122" gradientUnits="userSpaceOnUse" x1="-163.0" y1="-30" x2="163.0" y2="35"><stop offset="0" stop-color="#cbcbcb"/><stop offset="0.07" stop-color="#d3d3d3"/><stop offset="0.2" stop-color="#b1b1b1"/><stop offset="0.38" stop-color="#898989"/><stop offset="0.55" stop-color="#7a7a7a"/><stop offset="0.8" stop-color="#666666"/><stop offset="1" stop-color="#4c4c4c"/></linearGradient><linearGradient id="pg72" gradientUnits="userSpaceOnUse" x1="-163.0" y1="-30" x2="163.0" y2="35"><stop offset="0" stop-color="#808080"/><stop offset="0.07" stop-color="#808080"/><stop offset="0.2" stop-color="#6a6a6a"/><stop offset="0.38" stop-color="#515151"/><stop offset="0.55" stop-color="#484848"/><stop offset="0.8" stop-color="#3c3c3c"/><stop offset="1" stop-color="#2d2d2d"/></linearGradient><linearGradient id="pg82" gradientUnits="userSpaceOnUse" x1="-163.0" y1="-30" x2="163.0" y2="35"><stop offset="0" stop-color="#8f8f8f"/><stop offset="0.07" stop-color="#909090"/><stop offset="0.2" stop-color="#787878"/><stop offset="0.38" stop-color="#5c5c5c"/><stop offset="0.55" stop-color="#525252"/><stop offset="0.8" stop-color="#454545"/><stop offset="1" stop-color="#333333"/></linearGradient><linearGradient id="pg142" gradientUnits="userSpaceOnUse" x1="-163.0" y1="-30" x2="163.0" y2="35"><stop offset="0" stop-color="#e9e9e9"/><stop offset="0.07" stop-color="#f4f4f4"/><stop offset="0.2" stop-color="#cecece"/><stop offset="0.38" stop-color="#9f9f9f"/><stop offset="0.55" stop-color="#8e8e8e"/><stop offset="0.8" stop-color="#777777"/><stop offset="1" stop-color="#585858"/></linearGradient><linearGradient id="pg132" gradientUnits="userSpaceOnUse" x1="-163.0" y1="-30" x2="163.0" y2="35"><stop offset="0" stop-color="#dadada"/><stop offset="0.07" stop-color="#e3e3e3"/><stop offset="0.2" stop-color="#bfbfbf"/><stop offset="0.38" stop-color="#949494"/><stop offset="0.55" stop-color="#848484"/><stop offset="0.8" stop-color="#6f6f6f"/><stop offset="1" stop-color="#525252"/></linearGradient><linearGradient id="pg74" gradientUnits="userSpaceOnUse" x1="-163.0" y1="-30" x2="163.0" y2="35"><stop offset="0" stop-color="#838383"/><stop offset="0.07" stop-color="#838383"/><stop offset="0.2" stop-color="#6d6d6d"/><stop offset="0.38" stop-color="#535353"/><stop offset="0.55" stop-color="#4a4a4a"/><stop offset="0.8" stop-color="#3e3e3e"/><stop offset="1" stop-color="#2e2e2e"/></linearGradient><linearGradient id="pg124" gradientUnits="userSpaceOnUse" x1="-163.0" y1="-30" x2="163.0" y2="35"><stop offset="0" stop-color="#cecece"/><stop offset="0.07" stop-color="#d6d6d6"/><stop offset="0.2" stop-color="#b4b4b4"/><stop offset="0.38" stop-color="#8b8b8b"/><stop offset="0.55" stop-color="#7c7c7c"/><stop offset="0.8" stop-color="#686868"/><stop offset="1" stop-color="#4d4d4d"/></linearGradient><linearGradient id="pg136" gradientUnits="userSpaceOnUse" x1="-163.0" y1="-30" x2="163.0" y2="35"><stop offset="0" stop-color="#e0e0e0"/><stop offset="0.07" stop-color="#eaeaea"/><stop offset="0.2" stop-color="#c5c5c5"/><stop offset="0.38" stop-color="#989898"/><stop offset="0.55" stop-color="#888888"/><stop offset="0.8" stop-color="#727272"/><stop offset="1" stop-color="#545454"/></linearGradient><linearGradient id="pg66" gradientUnits="userSpaceOnUse" x1="-163.0" y1="-30" x2="163.0" y2="35"><stop offset="0" stop-color="#777777"/><stop offset="0.07" stop-color="#767676"/><stop offset="0.2" stop-color="#626262"/><stop offset="0.38" stop-color="#4a4a4a"/><stop offset="0.55" stop-color="#424242"/><stop offset="0.8" stop-color="#373737"/><stop offset="1" stop-color="#292929"/></linearGradient><linearGradient id="pg80" gradientUnits="userSpaceOnUse" x1="-163.0" y1="-30" x2="163.0" y2="35"><stop offset="0" stop-color="#8c8c8c"/><stop offset="0.07" stop-color="#8d8d8d"/><stop offset="0.2" stop-color="#767676"/><stop offset="0.38" stop-color="#5a5a5a"/><stop offset="0.55" stop-color="#505050"/><stop offset="0.8" stop-color="#434343"/><stop offset="1" stop-color="#323232"/></linearGradient><linearGradient id="pg94" gradientUnits="userSpaceOnUse" x1="-163.0" y1="-30" x2="163.0" y2="35"><stop offset="0" stop-color="#a1a1a1"/><stop offset="0.07" stop-color="#a4a4a4"/><stop offset="0.2" stop-color="#898989"/><stop offset="0.38" stop-color="#696969"/><stop offset="0.55" stop-color="#5e5e5e"/><stop offset="0.8" stop-color="#4f4f4f"/><stop offset="1" stop-color="#3a3a3a"/></linearGradient><linearGradient id="pg86" gradientUnits="userSpaceOnUse" x1="-163.0" y1="-30" x2="163.0" y2="35"><stop offset="0" stop-color="#959595"/><stop offset="0.07" stop-color="#979797"/><stop offset="0.2" stop-color="#7e7e7e"/><stop offset="0.38" stop-color="#606060"/><stop offset="0.55" stop-color="#565656"/><stop offset="0.8" stop-color="#484848"/><stop offset="1" stop-color="#353535"/></linearGradient><linearGradient id="pg77" gradientUnits="userSpaceOnUse" x1="-163.0" y1="-30" x2="163.0" y2="35"><stop offset="0" stop-color="#888888"/><stop offset="0.07" stop-color="#888888"/><stop offset="0.2" stop-color="#717171"/><stop offset="0.38" stop-color="#565656"/><stop offset="0.55" stop-color="#4d4d4d"/><stop offset="0.8" stop-color="#414141"/><stop offset="1" stop-color="#303030"/></linearGradient><linearGradient id="pg84" gradientUnits="userSpaceOnUse" x1="-163.0" y1="-30" x2="163.0" y2="35"><stop offset="0" stop-color="#929292"/><stop offset="0.07" stop-color="#939393"/><stop offset="0.2" stop-color="#7b7b7b"/><stop offset="0.38" stop-color="#5e5e5e"/><stop offset="0.55" stop-color="#545454"/><stop offset="0.8" stop-color="#474747"/><stop offset="1" stop-color="#343434"/></linearGradient><linearGradient id="pg90" gradientUnits="userSpaceOnUse" x1="-163.0" y1="-30" x2="163.0" y2="35"><stop offset="0" stop-color="#9b9b9b"/><stop offset="0.07" stop-color="#9d9d9d"/><stop offset="0.2" stop-color="#848484"/><stop offset="0.38" stop-color="#656565"/><stop offset="0.55" stop-color="#5a5a5a"/><stop offset="0.8" stop-color="#4c4c4c"/><stop offset="1" stop-color="#383838"/></linearGradient><linearGradient id="pg104" gradientUnits="userSpaceOnUse" x1="-163.0" y1="-30" x2="163.0" y2="35"><stop offset="0" stop-color="#b0b0b0"/><stop offset="0.07" stop-color="#b5b5b5"/><stop offset="0.2" stop-color="#989898"/><stop offset="0.38" stop-color="#747474"/><stop offset="0.55" stop-color="#686868"/><stop offset="0.8" stop-color="#575757"/><stop offset="1" stop-color="#404040"/></linearGradient>
<clipPath id="cShadow"><path d="M900 382 L1300 523 L1300 771 L900 615 Z"/></clipPath>
<clipPath id="cPurple"><path d="M585 356.5 L700 424 L920 480 L881 337 L955.5 325.3 L990 320 L990 290 L585 290 Z"/></clipPath>
<clipPath id="cPlanet"><ellipse cx="0" cy="0" rx="163.0" ry="166.0"/></clipPath>
<clipPath id="cPlanetS"><ellipse cx="919.6" cy="499.8" rx="163.0" ry="166.0" transform="rotate(6.0 919.6 499.8)"/></clipPath>
<clipPath id="cFront"><path d="M-395.78000000000003 0 L395.78000000000003 0 L395.78000000000003 395.78000000000003 L-395.78000000000003 395.78000000000003 Z"/></clipPath>
<mask id="mHole" maskUnits="userSpaceOnUse" x="-395.78000000000003" y="-395.78000000000003" width="791.5600000000001" height="791.5600000000001"><rect x="-395.78000000000003" y="-395.78000000000003" width="791.5600000000001" height="791.5600000000001" fill="#fff"/><ellipse rx="247.83" ry="232.43" fill="#000"/></mask>
<mask id="mHole2" maskUnits="userSpaceOnUse" x="-395.78000000000003" y="-395.78000000000003" width="791.5600000000001" height="791.5600000000001"><rect x="-395.78000000000003" y="-395.78000000000003" width="791.5600000000001" height="791.5600000000001" fill="#fff"/><circle cx="-2.93" cy="1.26" r="246.46" fill="#000" /></mask>
<filter id="fb1" x="-5%" y="-5%" width="110%" height="110%"><feGaussianBlur stdDeviation="1.1"/></filter>
<filter id="fb2" x="-5%" y="-5%" width="110%" height="110%"><feGaussianBlur stdDeviation="2"/></filter>
<filter id="fb05" x="-5%" y="-5%" width="110%" height="110%"><feGaussianBlur stdDeviation="0.45"/></filter>
<radialGradient id="pEdge" cx=".40" cy=".44" r=".64"><stop offset=".80" stop-color="#000" stop-opacity="0"/><stop offset="1" stop-color="#000" stop-opacity=".38"/></radialGradient>
<linearGradient id="pBot" x1="0" y1="0" x2="0" y2="1"><stop offset=".74" stop-color="#000" stop-opacity="0"/><stop offset="1" stop-color="#000" stop-opacity=".4"/></linearGradient>
</defs>
<g filter="url(#fb1)"><g transform="translate(910.9,507.2) rotate(12.7) scale(1,0.5231)"><circle cx="0.00" cy="0.00" r="364.12" fill="url(#gFade_1006)" /><circle cx="0.00" cy="0.00" r="359.80" fill="url(#gAo_991)" /><circle cx="0.00" cy="0.00" r="353.32" fill="url(#gEn_980)" /><circle cx="0.00" cy="0.00" r="351.88" fill="url(#gA_972)" /><circle cx="0.00" cy="0.00" r="347.57" fill="url(#gA_961)" /><circle cx="0.00" cy="0.00" r="344.33" fill="url(#gA_936)" /><circle cx="0.00" cy="0.00" r="329.22" fill="url(#gA2_896)" /><circle cx="3.90" cy="-1.68" r="316.08" fill="url(#gCa_870)" /><circle cx="3.90" cy="-1.68" r="310.15" fill="url(#gB1_831)" /><circle cx="1.95" cy="-0.84" r="287.84" fill="url(#gB2_770)" /><circle cx="0.00" cy="0.00" r="266.25" fill="url(#gB3_722)" /><circle cx="-1.95" cy="0.84" r="253.66" fill="url(#gB4_695)" /><circle cx="-2.93" cy="1.26" r="246.46" fill="url(#gC_662)" /><circle cx="-1.95" cy="0.84" r="230.27" fill="url(#gC2_611)" /><circle cx="0.00" cy="0.00" r="209.76" fill="url(#gD_541)" /><circle cx="0.00" cy="0.00" r="179.90" fill="url(#gIn_450)" /><circle r="242.4" fill="none" stroke="#000" stroke-width="0.9" opacity="0.03"/><circle r="278.7" fill="none" stroke="#fff" stroke-width="1.3" opacity="0.20"/><circle r="193.5" fill="none" stroke="#fff" stroke-width="1.5" opacity="0.12"/><circle r="259.6" fill="none" stroke="#fff" stroke-width="2.3" opacity="0.14"/><circle r="294.3" fill="none" stroke="#000" stroke-width="2.5" opacity="0.05"/><circle r="353.9" fill="none" stroke="#000" stroke-width="0.7" opacity="0.05"/><circle r="211.7" fill="none" stroke="#fff" stroke-width="0.8" opacity="0.26"/><circle r="218.0" fill="none" stroke="#000" stroke-width="1.8" opacity="0.05"/><circle r="280.7" fill="none" stroke="#fff" stroke-width="0.7" opacity="0.14"/><circle r="303.4" fill="none" stroke="#fff" stroke-width="1.5" opacity="0.22"/><circle r="264.5" fill="none" stroke="#000" stroke-width="1.2" opacity="0.07"/><circle r="228.8" fill="none" stroke="#fff" stroke-width="1.7" opacity="0.28"/><circle r="236.3" fill="none" stroke="#fff" stroke-width="2.6" opacity="0.18"/><circle r="213.1" fill="none" stroke="#fff" stroke-width="1.6" opacity="0.23"/><circle r="317.8" fill="none" stroke="#000" stroke-width="1.7" opacity="0.05"/><circle r="305.9" fill="none" stroke="#000" stroke-width="1.8" opacity="0.06"/><circle r="330.7" fill="none" stroke="#fff" stroke-width="2.5" opacity="0.23"/><circle r="197.5" fill="none" stroke="#000" stroke-width="2.0" opacity="0.09"/><circle r="327.6" fill="none" stroke="#fff" stroke-width="1.2" opacity="0.23"/><circle r="191.0" fill="none" stroke="#fff" stroke-width="1.5" opacity="0.12"/><circle r="197.2" fill="none" stroke="#fff" stroke-width="2.1" opacity="0.15"/><circle r="253.9" fill="none" stroke="#fff" stroke-width="2.3" opacity="0.19"/><circle r="281.0" fill="none" stroke="#000" stroke-width="2.4" opacity="0.08"/><circle r="234.7" fill="none" stroke="#fff" stroke-width="1.4" opacity="0.28"/><circle r="350.8" fill="none" stroke="#fff" stroke-width="0.9" opacity="0.15"/><circle r="227.0" fill="none" stroke="#000" stroke-width="1.6" opacity="0.05"/><circle r="187.8" fill="none" stroke="#fff" stroke-width="1.4" opacity="0.21"/><circle r="350.0" fill="none" stroke="#fff" stroke-width="2.0" opacity="0.22"/><circle r="302.7" fill="none" stroke="#000" stroke-width="0.7" opacity="0.08"/><circle r="336.6" fill="none" stroke="#fff" stroke-width="2.2" opacity="0.18"/><circle r="204.8" fill="none" stroke="#fff" stroke-width="1.9" opacity="0.11"/><circle r="222.8" fill="none" stroke="#fff" stroke-width="0.9" opacity="0.11"/><circle r="187.1" fill="none" stroke="#fff" stroke-width="0.9" opacity="0.17"/><circle r="191.5" fill="none" stroke="#000" stroke-width="2.3" opacity="0.04"/><circle r="230.2" fill="none" stroke="#fff" stroke-width="1.3" opacity="0.12"/><circle r="332.2" fill="none" stroke="#fff" stroke-width="2.6" opacity="0.20"/><circle r="201.8" fill="none" stroke="#fff" stroke-width="0.8" opacity="0.15"/><circle r="328.8" fill="none" stroke="#fff" stroke-width="0.9" opacity="0.29"/><circle r="277.4" fill="none" stroke="#fff" stroke-width="0.9" opacity="0.11"/><circle r="277.4" fill="none" stroke="#000" stroke-width="2.6" opacity="0.07"/><circle r="231.7" fill="none" stroke="#fff" stroke-width="1.3" opacity="0.25"/><circle r="278.1" fill="none" stroke="#fff" stroke-width="2.2" opacity="0.14"/><circle r="325.8" fill="none" stroke="#000" stroke-width="2.6" opacity="0.08"/><circle r="327.0" fill="none" stroke="#fff" stroke-width="2.1" opacity="0.20"/></g></g>
<g clip-path="url(#cShadow)"><g transform="translate(910.9,507.2) rotate(12.7) scale(1,0.5231)" filter="url(#fb05)"><circle cx="0.00" cy="0.00" r="359.80" fill="#505050" /><circle cx="0.00" cy="0.00" r="353.32" fill="#9a9a9a" /><circle cx="0.00" cy="0.00" r="351.88" fill="#525252" /><circle cx="0.00" cy="0.00" r="347.57" fill="#525252" /><circle cx="0.00" cy="0.00" r="344.33" fill="#525252" /><circle cx="0.00" cy="0.00" r="329.22" fill="#555555" /><circle cx="3.90" cy="-1.68" r="316.08" fill="#858585" /><circle cx="3.90" cy="-1.68" r="310.15" fill="#565656" /><circle cx="1.95" cy="-0.84" r="287.84" fill="#5a5a5a" /><circle cx="0.00" cy="0.00" r="266.25" fill="#616161" /><circle cx="-1.95" cy="0.84" r="253.66" fill="#707070" /><circle cx="-2.93" cy="1.26" r="246.46" fill="#c2c2c2" /><circle cx="-1.95" cy="0.84" r="230.27" fill="#cccccc" /><circle cx="0.00" cy="0.00" r="209.76" fill="#d9d9d9" /><circle cx="0.00" cy="0.00" r="179.90" fill="#dedede" /><circle r="279.4" fill="none" stroke="#fff" stroke-width="1.1" opacity="0.11"/><circle r="281.2" fill="none" stroke="#fff" stroke-width="1.1" opacity="0.09"/><circle r="241.8" fill="none" stroke="#fff" stroke-width="1.1" opacity="0.09"/><circle r="327.2" fill="none" stroke="#fff" stroke-width="0.6" opacity="0.06"/><circle r="228.6" fill="none" stroke="#fff" stroke-width="1.4" opacity="0.10"/><circle r="221.8" fill="none" stroke="#fff" stroke-width="1.6" opacity="0.12"/><circle r="307.6" fill="none" stroke="#fff" stroke-width="1.2" opacity="0.05"/><circle r="218.0" fill="none" stroke="#fff" stroke-width="1.1" opacity="0.04"/><circle r="242.6" fill="none" stroke="#fff" stroke-width="0.8" opacity="0.04"/><circle r="281.0" fill="none" stroke="#fff" stroke-width="1.0" opacity="0.11"/><circle r="288.7" fill="none" stroke="#fff" stroke-width="1.2" opacity="0.08"/><circle r="280.1" fill="none" stroke="#fff" stroke-width="0.8" opacity="0.12"/><circle r="355.6" fill="none" stroke="#fff" stroke-width="1.4" opacity="0.10"/><circle r="260.1" fill="none" stroke="#fff" stroke-width="0.8" opacity="0.06"/><circle r="225.7" fill="none" stroke="#fff" stroke-width="1.3" opacity="0.07"/><circle r="334.7" fill="none" stroke="#fff" stroke-width="0.9" opacity="0.12"/><circle r="334.8" fill="none" stroke="#fff" stroke-width="0.5" opacity="0.06"/><circle r="343.6" fill="none" stroke="#fff" stroke-width="1.0" opacity="0.12"/><circle r="271.6" fill="none" stroke="#fff" stroke-width="0.6" opacity="0.09"/><circle r="325.1" fill="none" stroke="#fff" stroke-width="0.8" opacity="0.05"/><circle r="262.5" fill="none" stroke="#fff" stroke-width="1.6" opacity="0.10"/></g></g>
<g clip-path="url(#cPurple)"><g transform="translate(910.9,507.2) rotate(12.7) scale(1,0.5231)"><g mask="url(#mHole)"><ellipse rx="365.05" ry="357.10" fill="#bd99d8"/><ellipse rx="352.06" ry="349.04" fill="#f1eef3"/><ellipse rx="350.27" ry="341.27" fill="#80559b"/><ellipse rx="318.78" ry="306.84" fill="#e6e3e8"/><ellipse rx="311.16" ry="300.47" fill="#702e92"/></g></g></g>
<g transform="translate(919.6,499.8) rotate(6.0)"><g clip-path="url(#cPlanet)"><ellipse rx="163.0" ry="166.0" fill="#4a4a4a"/><g filter="url(#fb2)"><ellipse rx="163.0" ry="166.0" fill="url(#pg60)"/><path d="M-161.2 24.4 L-160.7 27.2 L-160.1 29.9 L-159.4 32.7 L-158.6 35.4 L-157.6 38.1 L-156.6 40.8 L-155.4 43.5 L-154.2 46.2 L-152.8 48.8 L-151.3 51.4 L-149.8 54.0 L-148.1 56.6 L-146.3 59.1 L-144.4 61.6 L-142.5 64.1 L-140.4 66.5 L-138.2 68.9 L-136.0 71.3 L-133.6 73.6 L-131.1 75.9 L-128.6 78.1 L-126.0 80.3 L-123.3 82.5 L-120.5 84.6 L-117.6 86.6 L-114.6 88.6 L-111.6 90.5 L-108.5 92.4 L-105.3 94.3 L-102.0 96.1 L-98.7 97.8 L-95.3 99.5 L-91.8 101.1 L-88.3 102.6 L-84.7 104.1 L-81.1 105.5 L-77.4 106.9 L-73.6 108.2 L-69.8 109.4 L-65.9 110.6 L-62.0 111.7 L-58.1 112.7 L-54.1 113.7 L-50.1 114.6 L-46.0 115.4 L-42.0 116.2 L-37.8 116.9 L-33.7 117.5 L-29.5 118.0 L-25.4 118.5 L-21.2 118.9 L-16.9 119.2 L-12.7 119.5 L-8.5 119.7 L-4.2 119.8 L-0.0 119.8 L4.2 119.8 L8.5 119.7 L12.7 119.5 L16.9 119.2 L21.2 118.9 L25.4 118.5 L29.5 118.0 L33.7 117.5 L37.8 116.9 L42.0 116.2 L46.0 115.4 L50.1 114.6 L54.1 113.7 L58.1 112.7 L62.0 111.7 L65.9 110.6 L69.8 109.4 L73.6 108.2 L77.4 106.9 L81.1 105.5 L84.7 104.1 L88.3 102.6 L91.8 101.1 L95.3 99.5 L98.7 97.8 L102.0 96.1 L105.3 94.3 L108.5 92.4 L111.6 90.5 L114.6 88.6 L117.6 86.6 L120.5 84.6 L123.3 82.5 L126.0 80.3 L128.6 78.1 L131.1 75.9 L133.6 73.6 L136.0 71.3 L138.2 68.9 L140.4 66.5 L142.5 64.1 L144.4 61.6 L146.3 59.1 L148.1 56.6 L149.8 54.0 L151.3 51.4 L152.8 48.8 L154.2 46.2 L155.4 43.5 L156.6 40.8 L157.6 38.1 L158.6 35.4 L159.4 32.7 L160.1 29.9 L160.7 27.2 L161.2 24.4 L166.1 25.1 L167.2 15.4 L167.8 5.6 L167.8 -4.2 L167.3 -13.9 L166.3 -23.7 L164.7 -33.3 L162.5 -42.9 L159.9 -52.3 L156.6 -61.5 L152.9 -70.5 L148.7 -79.3 L144.0 -87.9 L138.8 -96.1 L133.2 -104.1 L127.1 -111.7 L120.7 -118.9 L113.8 -125.7 L106.5 -132.2 L98.9 -138.2 L91.0 -143.7 L82.8 -148.8 L74.3 -153.3 L65.5 -157.4 L56.6 -161.0 L47.4 -164.0 L38.1 -166.5 L28.7 -168.5 L19.2 -169.9 L9.6 -170.7 L0.0 -171.0 L-9.6 -170.7 L-19.2 -169.9 L-28.7 -168.5 L-38.1 -166.5 L-47.4 -164.0 L-56.6 -161.0 L-65.5 -157.4 L-74.3 -153.3 L-82.8 -148.8 L-91.0 -143.7 L-98.9 -138.2 L-106.5 -132.2 L-113.8 -125.7 L-120.7 -118.9 L-127.1 -111.7 L-133.2 -104.1 L-138.8 -96.1 L-144.0 -87.9 L-148.7 -79.3 L-152.9 -70.5 L-156.6 -61.5 L-159.9 -52.3 L-162.5 -42.9 L-164.7 -33.3 L-166.3 -23.7 L-167.3 -13.9 L-167.8 -4.2 L-167.8 5.6 L-167.2 15.4 L-166.1 25.1Z" fill="url(#pg70)"/><path d="M-162.7 -9.4 L-162.8 -6.6 L-162.7 -3.8 L-162.6 -1.0 L-162.3 1.8 L-161.9 4.5 L-161.4 7.3 L-160.8 10.1 L-160.1 12.9 L-159.2 15.6 L-158.3 18.3 L-157.2 21.1 L-156.1 23.8 L-154.8 26.4 L-153.4 29.1 L-152.0 31.7 L-150.4 34.3 L-148.7 36.9 L-146.9 39.4 L-145.0 41.9 L-143.1 44.4 L-141.0 46.9 L-138.8 49.3 L-136.5 51.6 L-134.1 54.0 L-131.7 56.3 L-129.1 58.5 L-126.5 60.7 L-123.8 62.9 L-121.0 65.0 L-118.1 67.0 L-115.1 69.0 L-112.0 71.0 L-108.9 72.9 L-105.7 74.7 L-102.4 76.5 L-99.1 78.3 L-95.7 79.9 L-92.2 81.5 L-88.7 83.1 L-85.1 84.6 L-81.4 86.0 L-77.7 87.4 L-73.9 88.7 L-70.1 89.9 L-66.2 91.1 L-62.3 92.2 L-58.3 93.3 L-54.3 94.2 L-50.3 95.1 L-46.2 96.0 L-42.1 96.7 L-38.0 97.4 L-33.8 98.0 L-29.7 98.6 L-25.5 99.0 L-21.2 99.4 L-17.0 99.8 L-12.8 100.0 L-8.5 100.2 L-4.3 100.3 L-0.0 100.4 L4.3 100.3 L8.5 100.2 L12.8 100.0 L17.0 99.8 L21.2 99.4 L25.5 99.0 L29.7 98.6 L33.8 98.0 L38.0 97.4 L42.1 96.7 L46.2 96.0 L50.3 95.1 L54.3 94.2 L58.3 93.3 L62.3 92.2 L66.2 91.1 L70.1 89.9 L73.9 88.7 L77.7 87.4 L81.4 86.0 L85.1 84.6 L88.7 83.1 L92.2 81.5 L95.7 79.9 L99.1 78.3 L102.4 76.5 L105.7 74.7 L108.9 72.9 L112.0 71.0 L115.1 69.0 L118.1 67.0 L121.0 65.0 L123.8 62.9 L126.5 60.7 L129.1 58.5 L131.7 56.3 L134.1 54.0 L136.5 51.6 L138.8 49.3 L141.0 46.9 L143.1 44.4 L145.0 41.9 L146.9 39.4 L148.7 36.9 L150.4 34.3 L152.0 31.7 L153.4 29.1 L154.8 26.4 L156.1 23.8 L157.2 21.1 L158.3 18.3 L159.2 15.6 L160.1 12.9 L160.8 10.1 L161.4 7.3 L161.9 4.5 L162.3 1.8 L162.6 -1.0 L162.7 -3.8 L162.8 -6.6 L162.7 -9.4 L167.6 -9.7 L166.9 -18.3 L165.8 -26.9 L164.3 -35.4 L162.3 -43.7 L159.9 -52.0 L157.1 -60.2 L154.0 -68.2 L150.4 -76.0 L146.4 -83.6 L142.1 -91.0 L137.4 -98.2 L132.4 -105.2 L127.0 -111.8 L121.3 -118.2 L115.3 -124.3 L109.0 -130.1 L102.4 -135.5 L95.6 -140.6 L88.5 -145.3 L81.2 -149.7 L73.7 -153.6 L66.0 -157.2 L58.1 -160.4 L50.1 -163.2 L41.9 -165.6 L33.7 -167.5 L25.3 -169.0 L16.9 -170.1 L8.5 -170.8 L0.0 -171.0 L-8.5 -170.8 L-16.9 -170.1 L-25.3 -169.0 L-33.7 -167.5 L-41.9 -165.6 L-50.1 -163.2 L-58.1 -160.4 L-66.0 -157.2 L-73.7 -153.6 L-81.2 -149.7 L-88.5 -145.3 L-95.6 -140.6 L-102.4 -135.5 L-109.0 -130.1 L-115.3 -124.3 L-121.3 -118.2 L-127.0 -111.8 L-132.4 -105.2 L-137.4 -98.2 L-142.1 -91.0 L-146.4 -83.6 L-150.4 -76.0 L-154.0 -68.2 L-157.1 -60.2 L-159.9 -52.0 L-162.3 -43.7 L-164.3 -35.4 L-165.8 -26.9 L-166.9 -18.3 L-167.6 -9.7Z" fill="url(#pg130)"/><path d="M-161.3 -23.8 L-161.6 -21.0 L-161.7 -18.2 L-161.8 -15.5 L-161.7 -12.7 L-161.6 -9.9 L-161.3 -7.1 L-160.9 -4.3 L-160.4 -1.6 L-159.8 1.2 L-159.1 3.9 L-158.2 6.7 L-157.3 9.4 L-156.3 12.1 L-155.1 14.8 L-153.9 17.4 L-152.5 20.0 L-151.0 22.7 L-149.5 25.2 L-147.8 27.8 L-146.0 30.3 L-144.2 32.8 L-142.2 35.3 L-140.1 37.7 L-137.9 40.1 L-135.7 42.5 L-133.3 44.8 L-130.9 47.1 L-128.4 49.3 L-125.7 51.5 L-123.0 53.6 L-120.2 55.7 L-117.4 57.8 L-114.4 59.7 L-111.4 61.7 L-108.3 63.6 L-105.1 65.4 L-101.8 67.2 L-98.5 68.9 L-95.1 70.6 L-91.6 72.2 L-88.1 73.7 L-84.5 75.2 L-80.9 76.6 L-77.2 78.0 L-73.4 79.3 L-69.7 80.5 L-65.8 81.7 L-61.9 82.8 L-58.0 83.8 L-54.0 84.8 L-50.0 85.7 L-45.9 86.5 L-41.9 87.3 L-37.8 88.0 L-33.6 88.6 L-29.5 89.1 L-25.3 89.6 L-21.1 90.0 L-16.9 90.3 L-12.7 90.6 L-8.5 90.7 L-4.2 90.9 L-0.0 90.9 L4.2 90.9 L8.5 90.7 L12.7 90.6 L16.9 90.3 L21.1 90.0 L25.3 89.6 L29.5 89.1 L33.6 88.6 L37.8 88.0 L41.9 87.3 L45.9 86.5 L50.0 85.7 L54.0 84.8 L58.0 83.8 L61.9 82.8 L65.8 81.7 L69.7 80.5 L73.4 79.3 L77.2 78.0 L80.9 76.6 L84.5 75.2 L88.1 73.7 L91.6 72.2 L95.1 70.6 L98.5 68.9 L101.8 67.2 L105.1 65.4 L108.3 63.6 L111.4 61.7 L114.4 59.7 L117.4 57.8 L120.2 55.7 L123.0 53.6 L125.7 51.5 L128.4 49.3 L130.9 47.1 L133.3 44.8 L135.7 42.5 L137.9 40.1 L140.1 37.7 L142.2 35.3 L144.2 32.8 L146.0 30.3 L147.8 27.8 L149.5 25.2 L151.0 22.7 L152.5 20.0 L153.9 17.4 L155.1 14.8 L156.3 12.1 L157.3 9.4 L158.2 6.7 L159.1 3.9 L159.8 1.2 L160.4 -1.6 L160.9 -4.3 L161.3 -7.1 L161.6 -9.9 L161.7 -12.7 L161.8 -15.5 L161.7 -18.2 L161.6 -21.0 L161.3 -23.8 L166.2 -24.5 L164.8 -32.5 L163.1 -40.5 L161.0 -48.3 L158.6 -56.1 L155.8 -63.7 L152.7 -71.2 L149.2 -78.5 L145.3 -85.6 L141.2 -92.5 L136.7 -99.3 L131.9 -105.8 L126.8 -112.1 L121.4 -118.1 L115.8 -123.8 L109.9 -129.3 L103.7 -134.5 L97.3 -139.3 L90.7 -143.9 L83.9 -148.1 L76.9 -152.0 L69.7 -155.6 L62.4 -158.8 L54.9 -161.6 L47.3 -164.1 L39.6 -166.2 L31.7 -167.9 L23.9 -169.2 L15.9 -170.2 L8.0 -170.8 L0.0 -171.0 L-8.0 -170.8 L-15.9 -170.2 L-23.9 -169.2 L-31.7 -167.9 L-39.6 -166.2 L-47.3 -164.1 L-54.9 -161.6 L-62.4 -158.8 L-69.7 -155.6 L-76.9 -152.0 L-83.9 -148.1 L-90.7 -143.9 L-97.3 -139.3 L-103.7 -134.5 L-109.9 -129.3 L-115.8 -123.8 L-121.4 -118.1 L-126.8 -112.1 L-131.9 -105.8 L-136.7 -99.3 L-141.2 -92.5 L-145.3 -85.6 L-149.2 -78.5 L-152.7 -71.2 L-155.8 -63.7 L-158.6 -56.1 L-161.0 -48.3 L-163.1 -40.5 L-164.8 -32.5 L-166.2 -24.5Z" fill="url(#pg122)"/><path d="M-158.0 -40.6 L-158.6 -37.9 L-159.1 -35.2 L-159.5 -32.4 L-159.8 -29.7 L-160.0 -26.9 L-160.0 -24.2 L-160.0 -21.4 L-159.8 -18.7 L-159.5 -15.9 L-159.1 -13.2 L-158.6 -10.5 L-158.0 -7.7 L-157.3 -5.0 L-156.5 -2.3 L-155.6 0.4 L-154.6 3.0 L-153.4 5.7 L-152.2 8.3 L-150.8 10.9 L-149.4 13.5 L-147.8 16.1 L-146.2 18.6 L-144.4 21.1 L-142.6 23.6 L-140.6 26.0 L-138.6 28.4 L-136.4 30.8 L-134.2 33.1 L-131.9 35.4 L-129.4 37.6 L-126.9 39.8 L-124.3 42.0 L-121.7 44.1 L-118.9 46.2 L-116.1 48.2 L-113.1 50.2 L-110.1 52.1 L-107.1 54.0 L-103.9 55.8 L-100.7 57.5 L-97.4 59.3 L-94.0 60.9 L-90.6 62.5 L-87.1 64.0 L-83.6 65.5 L-80.0 66.9 L-76.3 68.2 L-72.6 69.5 L-68.9 70.7 L-65.1 71.9 L-61.2 73.0 L-57.3 74.0 L-53.4 75.0 L-49.4 75.8 L-45.4 76.7 L-41.4 77.4 L-37.4 78.1 L-33.3 78.7 L-29.2 79.2 L-25.0 79.7 L-20.9 80.1 L-16.7 80.4 L-12.6 80.7 L-8.4 80.8 L-4.2 80.9 L-0.0 81.0 L4.2 80.9 L8.4 80.8 L12.6 80.7 L16.7 80.4 L20.9 80.1 L25.0 79.7 L29.2 79.2 L33.3 78.7 L37.4 78.1 L41.4 77.4 L45.4 76.7 L49.4 75.8 L53.4 75.0 L57.3 74.0 L61.2 73.0 L65.1 71.9 L68.9 70.7 L72.6 69.5 L76.3 68.2 L80.0 66.9 L83.6 65.5 L87.1 64.0 L90.6 62.5 L94.0 60.9 L97.4 59.3 L100.7 57.5 L103.9 55.8 L107.1 54.0 L110.1 52.1 L113.1 50.2 L116.1 48.2 L118.9 46.2 L121.7 44.1 L124.3 42.0 L126.9 39.8 L129.4 37.6 L131.9 35.4 L134.2 33.1 L136.4 30.8 L138.6 28.4 L140.6 26.0 L142.6 23.6 L144.4 21.1 L146.2 18.6 L147.8 16.1 L149.4 13.5 L150.8 10.9 L152.2 8.3 L153.4 5.7 L154.6 3.0 L155.6 0.4 L156.5 -2.3 L157.3 -5.0 L158.0 -7.7 L158.6 -10.5 L159.1 -13.2 L159.5 -15.9 L159.8 -18.7 L160.0 -21.4 L160.0 -24.2 L160.0 -26.9 L159.8 -29.7 L159.5 -32.4 L159.1 -35.2 L158.6 -37.9 L158.0 -40.6 L162.8 -41.9 L160.8 -49.1 L158.5 -56.3 L155.9 -63.4 L153.0 -70.3 L149.8 -77.1 L146.4 -83.8 L142.6 -90.3 L138.5 -96.6 L134.2 -102.7 L129.6 -108.6 L124.8 -114.4 L119.7 -119.9 L114.4 -125.1 L108.9 -130.1 L103.2 -134.9 L97.2 -139.4 L91.1 -143.6 L84.8 -147.6 L78.3 -151.2 L71.7 -154.6 L64.9 -157.7 L58.0 -160.4 L51.0 -162.9 L43.9 -165.0 L36.7 -166.8 L29.5 -168.3 L22.2 -169.5 L14.8 -170.3 L7.4 -170.8 L0.0 -171.0 L-7.4 -170.8 L-14.8 -170.3 L-22.2 -169.5 L-29.5 -168.3 L-36.7 -166.8 L-43.9 -165.0 L-51.0 -162.9 L-58.0 -160.4 L-64.9 -157.7 L-71.7 -154.6 L-78.3 -151.2 L-84.8 -147.6 L-91.1 -143.6 L-97.2 -139.4 L-103.2 -134.9 L-108.9 -130.1 L-114.4 -125.1 L-119.7 -119.9 L-124.8 -114.4 L-129.6 -108.6 L-134.2 -102.7 L-138.5 -96.6 L-142.6 -90.3 L-146.4 -83.8 L-149.8 -77.1 L-153.0 -70.3 L-155.9 -63.4 L-158.5 -56.3 L-160.8 -49.1 L-162.8 -41.9Z" fill="url(#pg72)"/><path d="M-152.7 -58.0 L-153.6 -55.3 L-154.4 -52.7 L-155.1 -50.0 L-155.7 -47.4 L-156.2 -44.7 L-156.6 -42.0 L-156.9 -39.3 L-157.0 -36.6 L-157.1 -33.9 L-157.0 -31.2 L-156.9 -28.5 L-156.6 -25.8 L-156.2 -23.1 L-155.7 -20.4 L-155.1 -17.7 L-154.4 -15.1 L-153.6 -12.4 L-152.7 -9.8 L-151.7 -7.2 L-150.6 -4.6 L-149.4 -2.0 L-148.1 0.6 L-146.6 3.1 L-145.1 5.6 L-143.5 8.1 L-141.8 10.6 L-140.0 13.0 L-138.0 15.4 L-136.0 17.7 L-133.9 20.1 L-131.7 22.4 L-129.4 24.6 L-127.1 26.8 L-124.6 29.0 L-122.1 31.1 L-119.4 33.2 L-116.7 35.2 L-113.9 37.2 L-111.1 39.1 L-108.1 41.0 L-105.1 42.8 L-102.0 44.6 L-98.8 46.4 L-95.6 48.0 L-92.3 49.6 L-89.0 51.2 L-85.5 52.7 L-82.1 54.2 L-78.5 55.5 L-74.9 56.9 L-71.3 58.1 L-67.6 59.3 L-63.9 60.4 L-60.1 61.5 L-56.3 62.5 L-52.4 63.4 L-48.5 64.3 L-44.6 65.1 L-40.7 65.8 L-36.7 66.5 L-32.7 67.1 L-28.6 67.6 L-24.6 68.1 L-20.5 68.5 L-16.4 68.8 L-12.3 69.0 L-8.2 69.2 L-4.1 69.3 L-0.0 69.4 L4.1 69.3 L8.2 69.2 L12.3 69.0 L16.4 68.8 L20.5 68.5 L24.6 68.1 L28.6 67.6 L32.7 67.1 L36.7 66.5 L40.7 65.8 L44.6 65.1 L48.5 64.3 L52.4 63.4 L56.3 62.5 L60.1 61.5 L63.9 60.4 L67.6 59.3 L71.3 58.1 L74.9 56.9 L78.5 55.5 L82.1 54.2 L85.5 52.7 L89.0 51.2 L92.3 49.6 L95.6 48.0 L98.8 46.4 L102.0 44.6 L105.1 42.8 L108.1 41.0 L111.1 39.1 L113.9 37.2 L116.7 35.2 L119.4 33.2 L122.1 31.1 L124.6 29.0 L127.1 26.8 L129.4 24.6 L131.7 22.4 L133.9 20.1 L136.0 17.7 L138.0 15.4 L140.0 13.0 L141.8 10.6 L143.5 8.1 L145.1 5.6 L146.6 3.1 L148.1 0.6 L149.4 -2.0 L150.6 -4.6 L151.7 -7.2 L152.7 -9.8 L153.6 -12.4 L154.4 -15.1 L155.1 -17.7 L155.7 -20.4 L156.2 -23.1 L156.6 -25.8 L156.9 -28.5 L157.0 -31.2 L157.1 -33.9 L157.0 -36.6 L156.9 -39.3 L156.6 -42.0 L156.2 -44.7 L155.7 -47.4 L155.1 -50.0 L154.4 -52.7 L153.6 -55.3 L152.7 -58.0 L157.3 -59.7 L154.8 -66.2 L152.1 -72.5 L149.1 -78.7 L145.8 -84.8 L142.3 -90.7 L138.6 -96.5 L134.7 -102.1 L130.5 -107.6 L126.1 -112.9 L121.5 -118.0 L116.7 -122.9 L111.8 -127.6 L106.6 -132.1 L101.3 -136.4 L95.8 -140.4 L90.1 -144.3 L84.3 -147.9 L78.4 -151.2 L72.3 -154.3 L66.1 -157.2 L59.8 -159.8 L53.4 -162.1 L46.9 -164.2 L40.4 -166.0 L33.7 -167.5 L27.1 -168.7 L20.3 -169.7 L13.6 -170.4 L6.8 -170.8 L0.0 -171.0 L-6.8 -170.8 L-13.6 -170.4 L-20.3 -169.7 L-27.1 -168.7 L-33.7 -167.5 L-40.4 -166.0 L-46.9 -164.2 L-53.4 -162.1 L-59.8 -159.8 L-66.1 -157.2 L-72.3 -154.3 L-78.4 -151.2 L-84.3 -147.9 L-90.1 -144.3 L-95.8 -140.4 L-101.3 -136.4 L-106.6 -132.1 L-111.8 -127.6 L-116.7 -122.9 L-121.5 -118.0 L-126.1 -112.9 L-130.5 -107.6 L-134.7 -102.1 L-138.6 -96.5 L-142.3 -90.7 L-145.8 -84.8 L-149.1 -78.7 L-152.1 -72.5 L-154.8 -66.2 L-157.3 -59.7Z" fill="url(#pg82)"/><path d="M-146.9 -72.0 L-148.0 -69.4 L-148.9 -66.9 L-149.8 -64.3 L-150.6 -61.7 L-151.3 -59.1 L-151.9 -56.5 L-152.3 -53.9 L-152.7 -51.3 L-153.0 -48.6 L-153.1 -46.0 L-153.2 -43.4 L-153.1 -40.7 L-153.0 -38.1 L-152.7 -35.5 L-152.3 -32.8 L-151.9 -30.2 L-151.3 -27.6 L-150.6 -25.0 L-149.8 -22.4 L-148.9 -19.9 L-148.0 -17.3 L-146.9 -14.8 L-145.7 -12.3 L-144.4 -9.8 L-143.0 -7.3 L-141.5 -4.8 L-139.9 -2.4 L-138.2 -0.0 L-136.5 2.3 L-134.6 4.7 L-132.6 7.0 L-130.6 9.2 L-128.5 11.5 L-126.2 13.7 L-123.9 15.8 L-121.5 17.9 L-119.0 20.0 L-116.5 22.0 L-113.8 24.0 L-111.1 25.9 L-108.3 27.8 L-105.4 29.7 L-102.5 31.5 L-99.5 33.2 L-96.4 34.9 L-93.2 36.5 L-90.0 38.1 L-86.8 39.6 L-83.4 41.1 L-80.0 42.5 L-76.6 43.8 L-73.1 45.1 L-69.5 46.3 L-65.9 47.5 L-62.3 48.6 L-58.6 49.7 L-54.9 50.6 L-51.1 51.5 L-47.3 52.4 L-43.5 53.2 L-39.6 53.9 L-35.8 54.5 L-31.8 55.1 L-27.9 55.6 L-24.0 56.1 L-20.0 56.5 L-16.0 56.8 L-12.0 57.0 L-8.0 57.2 L-4.0 57.3 L-0.0 57.3 L4.0 57.3 L8.0 57.2 L12.0 57.0 L16.0 56.8 L20.0 56.5 L24.0 56.1 L27.9 55.6 L31.8 55.1 L35.8 54.5 L39.6 53.9 L43.5 53.2 L47.3 52.4 L51.1 51.5 L54.9 50.6 L58.6 49.7 L62.3 48.6 L65.9 47.5 L69.5 46.3 L73.1 45.1 L76.6 43.8 L80.0 42.5 L83.4 41.1 L86.8 39.6 L90.0 38.1 L93.2 36.5 L96.4 34.9 L99.5 33.2 L102.5 31.5 L105.4 29.7 L108.3 27.8 L111.1 25.9 L113.8 24.0 L116.5 22.0 L119.0 20.0 L121.5 17.9 L123.9 15.8 L126.2 13.7 L128.5 11.5 L130.6 9.2 L132.6 7.0 L134.6 4.7 L136.5 2.3 L138.2 -0.0 L139.9 -2.4 L141.5 -4.8 L143.0 -7.3 L144.4 -9.8 L145.7 -12.3 L146.9 -14.8 L148.0 -17.3 L148.9 -19.9 L149.8 -22.4 L150.6 -25.0 L151.3 -27.6 L151.9 -30.2 L152.3 -32.8 L152.7 -35.5 L153.0 -38.1 L153.1 -40.7 L153.2 -43.4 L153.1 -46.0 L153.0 -48.6 L152.7 -51.3 L152.3 -53.9 L151.9 -56.5 L151.3 -59.1 L150.6 -61.7 L149.8 -64.3 L148.9 -66.9 L148.0 -69.4 L146.9 -72.0 L151.3 -74.1 L148.5 -79.8 L145.4 -85.4 L142.2 -90.9 L138.7 -96.3 L135.1 -101.5 L131.3 -106.6 L127.3 -111.5 L123.1 -116.3 L118.7 -120.9 L114.2 -125.3 L109.5 -129.6 L104.7 -133.7 L99.7 -137.5 L94.6 -141.3 L89.3 -144.8 L84.0 -148.1 L78.5 -151.2 L72.9 -154.0 L67.2 -156.7 L61.4 -159.2 L55.5 -161.4 L49.5 -163.4 L43.5 -165.2 L37.4 -166.7 L31.2 -168.0 L25.0 -169.1 L18.8 -169.9 L12.6 -170.5 L6.3 -170.9 L-0.0 -171.0 L-6.3 -170.9 L-12.6 -170.5 L-18.8 -169.9 L-25.0 -169.1 L-31.2 -168.0 L-37.4 -166.7 L-43.5 -165.2 L-49.5 -163.4 L-55.5 -161.4 L-61.4 -159.2 L-67.2 -156.7 L-72.9 -154.0 L-78.5 -151.2 L-84.0 -148.1 L-89.3 -144.8 L-94.6 -141.3 L-99.7 -137.5 L-104.7 -133.7 L-109.5 -129.6 L-114.2 -125.3 L-118.7 -120.9 L-123.1 -116.3 L-127.3 -111.5 L-131.3 -106.6 L-135.1 -101.5 L-138.7 -96.3 L-142.2 -90.9 L-145.4 -85.4 L-148.5 -79.8 L-151.3 -74.1Z" fill="url(#pg142)"/><path d="M-135.9 -91.6 L-137.3 -89.2 L-138.7 -86.9 L-139.9 -84.5 L-141.1 -82.1 L-142.1 -79.6 L-143.1 -77.2 L-143.9 -74.7 L-144.7 -72.2 L-145.3 -69.7 L-145.9 -67.2 L-146.3 -64.7 L-146.7 -62.2 L-146.9 -59.6 L-147.1 -57.1 L-147.1 -54.6 L-147.1 -52.1 L-146.9 -49.5 L-146.7 -47.0 L-146.3 -44.5 L-145.9 -42.0 L-145.3 -39.5 L-144.7 -37.0 L-143.9 -34.5 L-143.1 -32.0 L-142.1 -29.6 L-141.1 -27.1 L-139.9 -24.7 L-138.7 -22.3 L-137.3 -19.9 L-135.9 -17.6 L-134.4 -15.2 L-132.8 -13.0 L-131.1 -10.7 L-129.3 -8.4 L-127.4 -6.2 L-125.4 -4.1 L-123.4 -1.9 L-121.2 0.2 L-119.0 2.3 L-116.7 4.3 L-114.3 6.3 L-111.9 8.2 L-109.3 10.1 L-106.7 12.0 L-104.0 13.8 L-101.3 15.6 L-98.4 17.3 L-95.5 19.0 L-92.6 20.6 L-89.6 22.1 L-86.5 23.7 L-83.3 25.1 L-80.1 26.5 L-76.9 27.9 L-73.6 29.2 L-70.2 30.4 L-66.8 31.6 L-63.3 32.7 L-59.8 33.8 L-56.3 34.8 L-52.7 35.7 L-49.1 36.6 L-45.5 37.4 L-41.8 38.1 L-38.1 38.8 L-34.3 39.5 L-30.6 40.0 L-26.8 40.5 L-23.0 40.9 L-19.2 41.3 L-15.4 41.6 L-11.5 41.8 L-7.7 42.0 L-3.9 42.1 L-0.0 42.1 L3.9 42.1 L7.7 42.0 L11.5 41.8 L15.4 41.6 L19.2 41.3 L23.0 40.9 L26.8 40.5 L30.6 40.0 L34.3 39.5 L38.1 38.8 L41.8 38.1 L45.5 37.4 L49.1 36.6 L52.7 35.7 L56.3 34.8 L59.8 33.8 L63.3 32.7 L66.8 31.6 L70.2 30.4 L73.6 29.2 L76.9 27.9 L80.1 26.5 L83.3 25.1 L86.5 23.7 L89.6 22.1 L92.6 20.6 L95.5 19.0 L98.4 17.3 L101.3 15.6 L104.0 13.8 L106.7 12.0 L109.3 10.1 L111.9 8.2 L114.3 6.3 L116.7 4.3 L119.0 2.3 L121.2 0.2 L123.4 -1.9 L125.4 -4.1 L127.4 -6.2 L129.3 -8.4 L131.1 -10.7 L132.8 -13.0 L134.4 -15.2 L135.9 -17.6 L137.3 -19.9 L138.7 -22.3 L139.9 -24.7 L141.1 -27.1 L142.1 -29.6 L143.1 -32.0 L143.9 -34.5 L144.7 -37.0 L145.3 -39.5 L145.9 -42.0 L146.3 -44.5 L146.7 -47.0 L146.9 -49.5 L147.1 -52.1 L147.1 -54.6 L147.1 -57.1 L146.9 -59.6 L146.7 -62.2 L146.3 -64.7 L145.9 -67.2 L145.3 -69.7 L144.7 -72.2 L143.9 -74.7 L143.1 -77.2 L142.1 -79.6 L141.1 -82.1 L139.9 -84.5 L138.7 -86.9 L137.3 -89.2 L135.9 -91.6 L140.0 -94.4 L136.9 -99.0 L133.6 -103.5 L130.2 -107.9 L126.7 -112.2 L123.0 -116.4 L119.1 -120.5 L115.2 -124.4 L111.1 -128.2 L106.9 -131.8 L102.6 -135.3 L98.2 -138.7 L93.7 -141.9 L89.0 -145.0 L84.3 -147.9 L79.5 -150.6 L74.6 -153.2 L69.6 -155.6 L64.5 -157.8 L59.4 -159.9 L54.2 -161.8 L49.0 -163.6 L43.6 -165.1 L38.3 -166.5 L32.9 -167.7 L27.5 -168.7 L22.0 -169.5 L16.5 -170.1 L11.0 -170.6 L5.5 -170.9 L0.0 -171.0 L-5.5 -170.9 L-11.0 -170.6 L-16.5 -170.1 L-22.0 -169.5 L-27.5 -168.7 L-32.9 -167.7 L-38.3 -166.5 L-43.6 -165.1 L-49.0 -163.6 L-54.2 -161.8 L-59.4 -159.9 L-64.5 -157.8 L-69.6 -155.6 L-74.6 -153.2 L-79.5 -150.6 L-84.3 -147.9 L-89.0 -145.0 L-93.7 -141.9 L-98.2 -138.7 L-102.6 -135.3 L-106.9 -131.8 L-111.1 -128.2 L-115.2 -124.4 L-119.1 -120.5 L-123.0 -116.4 L-126.7 -112.2 L-130.2 -107.9 L-133.6 -103.5 L-136.9 -99.0 L-140.0 -94.4Z" fill="url(#pg132)"/><path d="M-124.1 -107.7 L-125.8 -105.5 L-127.4 -103.3 L-129.0 -101.1 L-130.4 -98.9 L-131.8 -96.6 L-133.1 -94.4 L-134.3 -92.1 L-135.3 -89.7 L-136.4 -87.4 L-137.3 -85.1 L-138.1 -82.7 L-138.8 -80.3 L-139.4 -77.9 L-140.0 -75.5 L-140.4 -73.1 L-140.7 -70.7 L-141.0 -68.3 L-141.1 -65.8 L-141.2 -63.4 L-141.1 -61.0 L-141.0 -58.5 L-140.7 -56.1 L-140.4 -53.7 L-140.0 -51.3 L-139.4 -48.9 L-138.8 -46.5 L-138.1 -44.1 L-137.3 -41.7 L-136.4 -39.4 L-135.3 -37.0 L-134.3 -34.7 L-133.1 -32.4 L-131.8 -30.1 L-130.4 -27.9 L-129.0 -25.7 L-127.4 -23.4 L-125.8 -21.3 L-124.1 -19.1 L-122.3 -17.0 L-120.4 -14.9 L-118.4 -12.9 L-116.3 -10.8 L-114.2 -8.9 L-112.0 -6.9 L-109.7 -5.0 L-107.3 -3.1 L-104.9 -1.3 L-102.4 0.5 L-99.8 2.2 L-97.2 3.9 L-94.5 5.6 L-91.7 7.2 L-88.8 8.7 L-85.9 10.2 L-83.0 11.7 L-80.0 13.1 L-76.9 14.4 L-73.8 15.7 L-70.6 17.0 L-67.4 18.2 L-64.1 19.3 L-60.8 20.4 L-57.4 21.4 L-54.0 22.3 L-50.6 23.2 L-47.1 24.1 L-43.6 24.9 L-40.1 25.6 L-36.5 26.2 L-33.0 26.8 L-29.3 27.4 L-25.7 27.8 L-22.1 28.3 L-18.4 28.6 L-14.8 28.9 L-11.1 29.1 L-7.4 29.3 L-3.7 29.4 L-0.0 29.4 L3.7 29.4 L7.4 29.3 L11.1 29.1 L14.8 28.9 L18.4 28.6 L22.1 28.3 L25.7 27.8 L29.3 27.4 L33.0 26.8 L36.5 26.2 L40.1 25.6 L43.6 24.9 L47.1 24.1 L50.6 23.2 L54.0 22.3 L57.4 21.4 L60.8 20.4 L64.1 19.3 L67.4 18.2 L70.6 17.0 L73.8 15.7 L76.9 14.4 L80.0 13.1 L83.0 11.7 L85.9 10.2 L88.8 8.7 L91.7 7.2 L94.5 5.6 L97.2 3.9 L99.8 2.2 L102.4 0.5 L104.9 -1.3 L107.3 -3.1 L109.7 -5.0 L112.0 -6.9 L114.2 -8.9 L116.3 -10.8 L118.4 -12.9 L120.4 -14.9 L122.2 -17.0 L124.1 -19.1 L125.8 -21.3 L127.4 -23.4 L129.0 -25.7 L130.4 -27.9 L131.8 -30.1 L133.1 -32.4 L134.3 -34.7 L135.3 -37.0 L136.4 -39.4 L137.3 -41.7 L138.1 -44.1 L138.8 -46.5 L139.4 -48.9 L140.0 -51.3 L140.4 -53.7 L140.7 -56.1 L141.0 -58.5 L141.1 -61.0 L141.2 -63.4 L141.1 -65.8 L141.0 -68.3 L140.7 -70.7 L140.4 -73.1 L140.0 -75.5 L139.4 -77.9 L138.8 -80.3 L138.1 -82.7 L137.3 -85.1 L136.4 -87.4 L135.3 -89.7 L134.3 -92.1 L133.1 -94.4 L131.8 -96.6 L130.4 -98.9 L129.0 -101.1 L127.4 -103.3 L125.8 -105.5 L124.1 -107.7 L127.8 -110.9 L124.6 -114.6 L121.3 -118.2 L117.9 -121.7 L114.4 -125.1 L110.8 -128.4 L107.1 -131.6 L103.4 -134.7 L99.5 -137.7 L95.6 -140.6 L91.5 -143.3 L87.4 -146.0 L83.3 -148.5 L79.0 -150.8 L74.7 -153.1 L70.4 -155.2 L65.9 -157.2 L61.5 -159.1 L56.9 -160.8 L52.4 -162.5 L47.7 -163.9 L43.1 -165.3 L38.4 -166.5 L33.7 -167.5 L28.9 -168.4 L24.1 -169.2 L19.3 -169.8 L14.5 -170.3 L9.7 -170.7 L4.8 -170.9 L0.0 -171.0 L-4.8 -170.9 L-9.7 -170.7 L-14.5 -170.3 L-19.3 -169.8 L-24.1 -169.2 L-28.9 -168.4 L-33.7 -167.5 L-38.4 -166.5 L-43.1 -165.3 L-47.7 -163.9 L-52.4 -162.5 L-56.9 -160.8 L-61.5 -159.1 L-65.9 -157.2 L-70.4 -155.2 L-74.7 -153.1 L-79.0 -150.8 L-83.3 -148.5 L-87.4 -146.0 L-91.5 -143.3 L-95.6 -140.6 L-99.5 -137.7 L-103.4 -134.7 L-107.1 -131.6 L-110.8 -128.4 L-114.4 -125.1 L-117.9 -121.7 L-121.3 -118.2 L-124.6 -114.6 L-127.8 -110.9Z" fill="url(#pg74)"/><path d="M-114.0 -118.6 L-115.9 -116.7 L-117.7 -114.7 L-119.5 -112.6 L-121.1 -110.5 L-122.7 -108.4 L-124.2 -106.3 L-125.6 -104.2 L-126.9 -102.0 L-128.1 -99.8 L-129.3 -97.6 L-130.3 -95.4 L-131.3 -93.1 L-132.2 -90.8 L-133.0 -88.6 L-133.6 -86.3 L-134.2 -84.0 L-134.8 -81.6 L-135.2 -79.3 L-135.5 -77.0 L-135.7 -74.7 L-135.9 -72.3 L-135.9 -70.0 L-135.9 -67.6 L-135.7 -65.3 L-135.5 -63.0 L-135.2 -60.6 L-134.8 -58.3 L-134.2 -56.0 L-133.6 -53.7 L-133.0 -51.4 L-132.2 -49.1 L-131.3 -46.9 L-130.3 -44.6 L-129.3 -42.4 L-128.1 -40.2 L-126.9 -38.0 L-125.6 -35.8 L-124.2 -33.6 L-122.7 -31.5 L-121.1 -29.4 L-119.5 -27.3 L-117.7 -25.3 L-115.9 -23.3 L-114.0 -21.3 L-112.0 -19.4 L-110.0 -17.5 L-107.8 -15.6 L-105.6 -13.8 L-103.4 -12.0 L-101.0 -10.2 L-98.6 -8.5 L-96.1 -6.8 L-93.6 -5.2 L-91.0 -3.6 L-88.3 -2.0 L-85.5 -0.5 L-82.7 0.9 L-79.9 2.3 L-77.0 3.7 L-74.0 5.0 L-71.0 6.2 L-68.0 7.4 L-64.9 8.5 L-61.7 9.6 L-58.5 10.7 L-55.3 11.6 L-52.0 12.6 L-48.7 13.4 L-45.4 14.2 L-42.0 15.0 L-38.6 15.7 L-35.2 16.3 L-31.7 16.9 L-28.3 17.4 L-24.8 17.9 L-21.3 18.3 L-17.7 18.6 L-14.2 18.9 L-10.7 19.1 L-7.1 19.2 L-3.6 19.3 L-0.0 19.4 L3.6 19.3 L7.1 19.2 L10.7 19.1 L14.2 18.9 L17.7 18.6 L21.3 18.3 L24.8 17.9 L28.3 17.4 L31.7 16.9 L35.2 16.3 L38.6 15.7 L42.0 15.0 L45.4 14.2 L48.7 13.4 L52.0 12.6 L55.3 11.6 L58.5 10.7 L61.7 9.6 L64.9 8.5 L68.0 7.4 L71.0 6.2 L74.0 5.0 L77.0 3.7 L79.9 2.3 L82.7 0.9 L85.5 -0.5 L88.3 -2.0 L91.0 -3.6 L93.6 -5.2 L96.1 -6.8 L98.6 -8.5 L101.0 -10.2 L103.4 -12.0 L105.6 -13.8 L107.8 -15.6 L110.0 -17.5 L112.0 -19.4 L114.0 -21.3 L115.9 -23.3 L117.7 -25.3 L119.5 -27.3 L121.1 -29.4 L122.7 -31.5 L124.2 -33.6 L125.6 -35.8 L126.9 -38.0 L128.1 -40.2 L129.3 -42.4 L130.3 -44.6 L131.3 -46.9 L132.2 -49.1 L133.0 -51.4 L133.6 -53.7 L134.2 -56.0 L134.8 -58.3 L135.2 -60.6 L135.5 -63.0 L135.7 -65.3 L135.9 -67.6 L135.9 -70.0 L135.9 -72.3 L135.7 -74.7 L135.5 -77.0 L135.2 -79.3 L134.8 -81.6 L134.2 -84.0 L133.6 -86.3 L133.0 -88.6 L132.2 -90.8 L131.3 -93.1 L130.3 -95.4 L129.3 -97.6 L128.1 -99.8 L126.9 -102.0 L125.6 -104.2 L124.2 -106.3 L122.7 -108.4 L121.1 -110.5 L119.5 -112.6 L117.7 -114.7 L115.9 -116.7 L114.0 -118.6 L117.4 -122.2 L114.3 -125.3 L111.1 -128.2 L107.8 -131.1 L104.4 -133.9 L101.0 -136.6 L97.5 -139.2 L93.9 -141.7 L90.3 -144.1 L86.6 -146.5 L82.9 -148.7 L79.1 -150.8 L75.2 -152.8 L71.3 -154.8 L67.4 -156.6 L63.4 -158.3 L59.4 -159.9 L55.3 -161.4 L51.2 -162.8 L47.0 -164.1 L42.9 -165.3 L38.7 -166.4 L34.4 -167.3 L30.2 -168.2 L25.9 -168.9 L21.6 -169.6 L17.3 -170.1 L13.0 -170.5 L8.7 -170.8 L4.3 -170.9 L0.0 -171.0 L-4.3 -170.9 L-8.7 -170.8 L-13.0 -170.5 L-17.3 -170.1 L-21.6 -169.6 L-25.9 -168.9 L-30.2 -168.2 L-34.4 -167.3 L-38.7 -166.4 L-42.9 -165.3 L-47.0 -164.1 L-51.2 -162.8 L-55.3 -161.4 L-59.4 -159.9 L-63.4 -158.3 L-67.4 -156.6 L-71.3 -154.8 L-75.2 -152.8 L-79.1 -150.8 L-82.9 -148.7 L-86.6 -146.5 L-90.3 -144.1 L-93.9 -141.7 L-97.5 -139.2 L-101.0 -136.6 L-104.4 -133.9 L-107.8 -131.1 L-111.1 -128.2 L-114.3 -125.3 L-117.4 -122.2Z" fill="url(#pg82)"/><path d="M-104.0 -127.9 L-106.0 -126.0 L-108.0 -124.2 L-109.9 -122.3 L-111.7 -120.4 L-113.5 -118.5 L-115.2 -116.5 L-116.7 -114.5 L-118.3 -112.5 L-119.7 -110.4 L-121.1 -108.4 L-122.3 -106.3 L-123.5 -104.2 L-124.6 -102.0 L-125.6 -99.9 L-126.6 -97.7 L-127.4 -95.5 L-128.2 -93.3 L-128.8 -91.1 L-129.4 -88.9 L-129.9 -86.7 L-130.3 -84.4 L-130.6 -82.2 L-130.8 -79.9 L-131.0 -77.7 L-131.0 -75.4 L-131.0 -73.2 L-130.8 -70.9 L-130.6 -68.7 L-130.3 -66.4 L-129.9 -64.2 L-129.4 -61.9 L-128.8 -59.7 L-128.2 -57.5 L-127.4 -55.3 L-126.6 -53.1 L-125.6 -51.0 L-124.6 -48.8 L-123.5 -46.7 L-122.3 -44.6 L-121.1 -42.5 L-119.7 -40.4 L-118.3 -38.3 L-116.7 -36.3 L-115.2 -34.3 L-113.5 -32.4 L-111.7 -30.4 L-109.9 -28.5 L-108.0 -26.6 L-106.0 -24.8 L-104.0 -23.0 L-101.8 -21.2 L-99.6 -19.5 L-97.4 -17.8 L-95.0 -16.1 L-92.7 -14.5 L-90.2 -12.9 L-87.7 -11.4 L-85.1 -9.9 L-82.5 -8.5 L-79.8 -7.1 L-77.0 -5.7 L-74.2 -4.4 L-71.4 -3.2 L-68.5 -2.0 L-65.5 -0.8 L-62.5 0.3 L-59.5 1.3 L-56.4 2.3 L-53.3 3.3 L-50.1 4.2 L-47.0 5.0 L-43.7 5.8 L-40.5 6.5 L-37.2 7.2 L-33.9 7.8 L-30.6 8.3 L-27.2 8.8 L-23.9 9.3 L-20.5 9.7 L-17.1 10.0 L-13.7 10.2 L-10.3 10.4 L-6.9 10.6 L-3.4 10.7 L-0.0 10.7 L3.4 10.7 L6.9 10.6 L10.3 10.4 L13.7 10.2 L17.1 10.0 L20.5 9.7 L23.9 9.3 L27.2 8.8 L30.6 8.3 L33.9 7.8 L37.2 7.2 L40.5 6.5 L43.7 5.8 L47.0 5.0 L50.1 4.2 L53.3 3.3 L56.4 2.3 L59.5 1.3 L62.5 0.3 L65.5 -0.8 L68.5 -2.0 L71.4 -3.2 L74.2 -4.4 L77.0 -5.7 L79.8 -7.1 L82.5 -8.5 L85.1 -9.9 L87.7 -11.4 L90.2 -12.9 L92.7 -14.5 L95.0 -16.1 L97.4 -17.8 L99.6 -19.5 L101.8 -21.2 L104.0 -23.0 L106.0 -24.8 L108.0 -26.6 L109.9 -28.5 L111.7 -30.4 L113.5 -32.4 L115.2 -34.3 L116.7 -36.3 L118.3 -38.3 L119.7 -40.4 L121.1 -42.5 L122.3 -44.6 L123.5 -46.7 L124.6 -48.8 L125.6 -51.0 L126.6 -53.1 L127.4 -55.3 L128.2 -57.5 L128.8 -59.7 L129.4 -61.9 L129.9 -64.2 L130.3 -66.4 L130.6 -68.7 L130.8 -70.9 L131.0 -73.2 L131.0 -75.4 L131.0 -77.7 L130.8 -79.9 L130.6 -82.2 L130.3 -84.4 L129.9 -86.7 L129.4 -88.9 L128.8 -91.1 L128.2 -93.3 L127.4 -95.5 L126.6 -97.7 L125.6 -99.9 L124.6 -102.0 L123.5 -104.2 L122.3 -106.3 L121.1 -108.4 L119.7 -110.4 L118.3 -112.5 L116.7 -114.5 L115.2 -116.5 L113.5 -118.5 L111.7 -120.4 L109.9 -122.3 L108.0 -124.2 L106.0 -126.0 L104.0 -127.9 L107.1 -131.7 L104.1 -134.2 L101.0 -136.6 L97.9 -138.9 L94.7 -141.2 L91.5 -143.4 L88.2 -145.5 L84.9 -147.5 L81.5 -149.5 L78.1 -151.3 L74.7 -153.1 L71.2 -154.8 L67.7 -156.5 L64.1 -158.0 L60.5 -159.5 L56.9 -160.9 L53.3 -162.2 L49.6 -163.4 L45.9 -164.5 L42.1 -165.5 L38.4 -166.5 L34.6 -167.3 L30.8 -168.1 L27.0 -168.8 L23.1 -169.3 L19.3 -169.8 L15.5 -170.3 L11.6 -170.6 L7.7 -170.8 L3.9 -170.9 L0.0 -171.0 L-3.9 -170.9 L-7.7 -170.8 L-11.6 -170.6 L-15.5 -170.3 L-19.3 -169.8 L-23.1 -169.3 L-27.0 -168.8 L-30.8 -168.1 L-34.6 -167.3 L-38.4 -166.5 L-42.1 -165.5 L-45.9 -164.5 L-49.6 -163.4 L-53.3 -162.2 L-56.9 -160.9 L-60.5 -159.5 L-64.1 -158.0 L-67.7 -156.5 L-71.2 -154.8 L-74.7 -153.1 L-78.1 -151.3 L-81.5 -149.5 L-84.9 -147.5 L-88.2 -145.5 L-91.5 -143.4 L-94.7 -141.2 L-97.9 -138.9 L-101.0 -136.6 L-104.1 -134.2 L-107.1 -131.7Z" fill="url(#pg124)"/><path d="M-91.2 -137.6 L-93.5 -136.0 L-95.6 -134.3 L-97.7 -132.7 L-99.8 -131.0 L-101.8 -129.2 L-103.7 -127.5 L-105.5 -125.7 L-107.2 -123.8 L-108.9 -122.0 L-110.5 -120.1 L-112.1 -118.2 L-113.5 -116.2 L-114.9 -114.3 L-116.2 -112.3 L-117.4 -110.3 L-118.6 -108.2 L-119.6 -106.2 L-120.6 -104.1 L-121.5 -102.0 L-122.3 -99.9 L-123.0 -97.8 L-123.7 -95.7 L-124.2 -93.6 L-124.7 -91.4 L-125.1 -89.3 L-125.4 -87.1 L-125.6 -85.0 L-125.7 -82.8 L-125.8 -80.6 L-125.7 -78.5 L-125.6 -76.3 L-125.4 -74.2 L-125.1 -72.0 L-124.7 -69.9 L-124.2 -67.7 L-123.7 -65.6 L-123.0 -63.5 L-122.3 -61.3 L-121.5 -59.3 L-120.6 -57.2 L-119.6 -55.1 L-118.6 -53.1 L-117.4 -51.0 L-116.2 -49.0 L-114.9 -47.0 L-113.5 -45.1 L-112.1 -43.1 L-110.5 -41.2 L-108.9 -39.3 L-107.2 -37.5 L-105.5 -35.6 L-103.7 -33.8 L-101.8 -32.1 L-99.8 -30.3 L-97.7 -28.6 L-95.6 -27.0 L-93.5 -25.3 L-91.2 -23.7 L-88.9 -22.2 L-86.6 -20.7 L-84.2 -19.2 L-81.7 -17.8 L-79.2 -16.4 L-76.6 -15.1 L-73.9 -13.8 L-71.2 -12.5 L-68.5 -11.3 L-65.7 -10.2 L-62.9 -9.0 L-60.0 -8.0 L-57.1 -7.0 L-54.1 -6.0 L-51.2 -5.1 L-48.1 -4.3 L-45.1 -3.5 L-42.0 -2.7 L-38.9 -2.0 L-35.7 -1.4 L-32.6 -0.8 L-29.4 -0.3 L-26.2 0.2 L-22.9 0.6 L-19.7 1.0 L-16.4 1.3 L-13.1 1.6 L-9.9 1.8 L-6.6 1.9 L-3.3 2.0 L-0.0 2.0 L3.3 2.0 L6.6 1.9 L9.9 1.8 L13.1 1.6 L16.4 1.3 L19.7 1.0 L22.9 0.6 L26.2 0.2 L29.4 -0.3 L32.6 -0.8 L35.7 -1.4 L38.9 -2.0 L42.0 -2.7 L45.1 -3.5 L48.1 -4.3 L51.2 -5.1 L54.1 -6.0 L57.1 -7.0 L60.0 -8.0 L62.9 -9.0 L65.7 -10.2 L68.5 -11.3 L71.2 -12.5 L73.9 -13.8 L76.6 -15.1 L79.2 -16.4 L81.7 -17.8 L84.2 -19.2 L86.6 -20.7 L88.9 -22.2 L91.2 -23.7 L93.5 -25.3 L95.6 -27.0 L97.7 -28.6 L99.8 -30.3 L101.8 -32.1 L103.7 -33.8 L105.5 -35.6 L107.2 -37.5 L108.9 -39.3 L110.5 -41.2 L112.1 -43.1 L113.5 -45.1 L114.9 -47.0 L116.2 -49.0 L117.4 -51.0 L118.6 -53.1 L119.6 -55.1 L120.6 -57.2 L121.5 -59.3 L122.3 -61.3 L123.0 -63.5 L123.7 -65.6 L124.2 -67.7 L124.7 -69.9 L125.1 -72.0 L125.4 -74.2 L125.6 -76.3 L125.7 -78.5 L125.8 -80.6 L125.7 -82.8 L125.6 -85.0 L125.4 -87.1 L125.1 -89.3 L124.7 -91.4 L124.2 -93.6 L123.7 -95.7 L123.0 -97.8 L122.3 -99.9 L121.5 -102.0 L120.6 -104.1 L119.6 -106.2 L118.6 -108.2 L117.4 -110.3 L116.2 -112.3 L114.9 -114.3 L113.5 -116.2 L112.1 -118.2 L110.5 -120.1 L108.9 -122.0 L107.2 -123.8 L105.5 -125.7 L103.7 -127.5 L101.8 -129.2 L99.8 -131.0 L97.7 -132.7 L95.6 -134.3 L93.5 -136.0 L91.2 -137.6 L94.0 -141.7 L91.2 -143.6 L88.4 -145.4 L85.5 -147.1 L82.7 -148.8 L79.8 -150.5 L76.8 -152.0 L73.8 -153.6 L70.8 -155.0 L67.8 -156.4 L64.8 -157.7 L61.7 -159.0 L58.6 -160.2 L55.5 -161.4 L52.3 -162.5 L49.1 -163.5 L45.9 -164.5 L42.7 -165.3 L39.5 -166.2 L36.3 -166.9 L33.0 -167.6 L29.8 -168.3 L26.5 -168.8 L23.2 -169.3 L19.9 -169.8 L16.6 -170.1 L13.3 -170.4 L10.0 -170.7 L6.6 -170.8 L3.3 -170.9 L-0.0 -171.0 L-3.3 -170.9 L-6.6 -170.8 L-10.0 -170.7 L-13.3 -170.4 L-16.6 -170.1 L-19.9 -169.8 L-23.2 -169.3 L-26.5 -168.8 L-29.8 -168.3 L-33.0 -167.6 L-36.3 -166.9 L-39.5 -166.2 L-42.7 -165.3 L-45.9 -164.5 L-49.1 -163.5 L-52.3 -162.5 L-55.5 -161.4 L-58.6 -160.2 L-61.7 -159.0 L-64.8 -157.7 L-67.8 -156.4 L-70.8 -155.0 L-73.8 -153.6 L-76.8 -152.0 L-79.8 -150.5 L-82.7 -148.8 L-85.5 -147.1 L-88.4 -145.4 L-91.2 -143.6 L-94.0 -141.7Z" fill="url(#pg136)"/><path d="M-78.0 -145.7 L-80.4 -144.4 L-82.7 -143.0 L-85.0 -141.5 L-87.2 -140.0 L-89.3 -138.5 L-91.4 -137.0 L-93.4 -135.4 L-95.3 -133.7 L-97.2 -132.1 L-99.0 -130.4 L-100.8 -128.7 L-102.5 -126.9 L-104.1 -125.2 L-105.6 -123.4 L-107.1 -121.5 L-108.5 -119.7 L-109.8 -117.8 L-111.0 -115.9 L-112.2 -114.0 L-113.3 -112.0 L-114.3 -110.1 L-115.2 -108.1 L-116.1 -106.1 L-116.9 -104.1 L-117.6 -102.1 L-118.2 -100.1 L-118.7 -98.0 L-119.1 -96.0 L-119.5 -93.9 L-119.8 -91.9 L-120.0 -89.8 L-120.1 -87.7 L-120.2 -85.7 L-120.1 -83.6 L-120.0 -81.5 L-119.8 -79.5 L-119.5 -77.4 L-119.1 -75.3 L-118.7 -73.3 L-118.2 -71.3 L-117.6 -69.2 L-116.9 -67.2 L-116.1 -65.2 L-115.2 -63.2 L-114.3 -61.2 L-113.3 -59.3 L-112.2 -57.3 L-111.0 -55.4 L-109.8 -53.5 L-108.5 -51.6 L-107.1 -49.8 L-105.6 -48.0 L-104.1 -46.2 L-102.5 -44.4 L-100.8 -42.6 L-99.0 -40.9 L-97.2 -39.2 L-95.3 -37.6 L-93.4 -35.9 L-91.4 -34.4 L-89.3 -32.8 L-87.2 -31.3 L-85.0 -29.8 L-82.7 -28.4 L-80.4 -27.0 L-78.0 -25.6 L-75.6 -24.3 L-73.2 -23.0 L-70.6 -21.7 L-68.1 -20.6 L-65.5 -19.4 L-62.8 -18.3 L-60.1 -17.2 L-57.3 -16.2 L-54.6 -15.3 L-51.7 -14.4 L-48.9 -13.5 L-46.0 -12.7 L-43.1 -11.9 L-40.1 -11.2 L-37.1 -10.5 L-34.1 -9.9 L-31.1 -9.4 L-28.1 -8.8 L-25.0 -8.4 L-21.9 -8.0 L-18.8 -7.6 L-15.7 -7.3 L-12.6 -7.1 L-9.4 -6.9 L-6.3 -6.8 L-3.1 -6.7 L-0.0 -6.7 L3.1 -6.7 L6.3 -6.8 L9.4 -6.9 L12.6 -7.1 L15.7 -7.3 L18.8 -7.6 L21.9 -8.0 L25.0 -8.4 L28.1 -8.8 L31.1 -9.4 L34.1 -9.9 L37.1 -10.5 L40.1 -11.2 L43.1 -11.9 L46.0 -12.7 L48.9 -13.5 L51.7 -14.4 L54.6 -15.3 L57.3 -16.2 L60.1 -17.2 L62.8 -18.3 L65.5 -19.4 L68.1 -20.6 L70.6 -21.7 L73.2 -23.0 L75.6 -24.3 L78.0 -25.6 L80.4 -27.0 L82.7 -28.4 L85.0 -29.8 L87.2 -31.3 L89.3 -32.8 L91.4 -34.4 L93.4 -35.9 L95.3 -37.6 L97.2 -39.2 L99.0 -40.9 L100.8 -42.6 L102.5 -44.4 L104.1 -46.2 L105.6 -48.0 L107.1 -49.8 L108.5 -51.6 L109.8 -53.5 L111.0 -55.4 L112.2 -57.3 L113.3 -59.3 L114.3 -61.2 L115.2 -63.2 L116.1 -65.2 L116.9 -67.2 L117.6 -69.2 L118.2 -71.3 L118.7 -73.3 L119.1 -75.3 L119.5 -77.4 L119.8 -79.5 L120.0 -81.5 L120.1 -83.6 L120.2 -85.7 L120.1 -87.7 L120.0 -89.8 L119.8 -91.9 L119.5 -93.9 L119.1 -96.0 L118.7 -98.0 L118.2 -100.1 L117.6 -102.1 L116.9 -104.1 L116.1 -106.1 L115.2 -108.1 L114.3 -110.1 L113.3 -112.0 L112.2 -114.0 L111.0 -115.9 L109.8 -117.8 L108.5 -119.7 L107.1 -121.5 L105.6 -123.4 L104.1 -125.2 L102.5 -126.9 L100.8 -128.7 L99.0 -130.4 L97.2 -132.1 L95.3 -133.7 L93.4 -135.4 L91.4 -137.0 L89.3 -138.5 L87.2 -140.0 L85.0 -141.5 L82.7 -143.0 L80.4 -144.4 L78.0 -145.7 L80.4 -150.1 L77.9 -151.4 L75.4 -152.7 L72.9 -154.0 L70.4 -155.2 L67.9 -156.4 L65.3 -157.5 L62.7 -158.6 L60.1 -159.6 L57.5 -160.6 L54.9 -161.6 L52.2 -162.5 L49.6 -163.4 L46.9 -164.2 L44.2 -165.0 L41.5 -165.7 L38.8 -166.4 L36.0 -167.0 L33.3 -167.6 L30.6 -168.1 L27.8 -168.6 L25.1 -169.1 L22.3 -169.5 L19.5 -169.8 L16.7 -170.1 L14.0 -170.4 L11.2 -170.6 L8.4 -170.8 L5.6 -170.9 L2.8 -171.0 L-0.0 -171.0 L-2.8 -171.0 L-5.6 -170.9 L-8.4 -170.8 L-11.2 -170.6 L-14.0 -170.4 L-16.7 -170.1 L-19.5 -169.8 L-22.3 -169.5 L-25.1 -169.1 L-27.8 -168.6 L-30.6 -168.1 L-33.3 -167.6 L-36.0 -167.0 L-38.8 -166.4 L-41.5 -165.7 L-44.2 -165.0 L-46.9 -164.2 L-49.6 -163.4 L-52.2 -162.5 L-54.9 -161.6 L-57.5 -160.6 L-60.1 -159.6 L-62.7 -158.6 L-65.3 -157.5 L-67.9 -156.4 L-70.4 -155.2 L-72.9 -154.0 L-75.4 -152.7 L-77.9 -151.4 L-80.4 -150.1Z" fill="url(#pg66)"/><path d="M-65.9 -151.8 L-68.3 -150.7 L-70.8 -149.5 L-73.2 -148.3 L-75.5 -147.0 L-77.8 -145.7 L-80.0 -144.3 L-82.2 -142.9 L-84.3 -141.5 L-86.4 -140.0 L-88.4 -138.5 L-90.4 -137.0 L-92.2 -135.4 L-94.1 -133.8 L-95.8 -132.2 L-97.5 -130.5 L-99.1 -128.8 L-100.7 -127.1 L-102.2 -125.3 L-103.6 -123.6 L-104.9 -121.8 L-106.2 -120.0 L-107.4 -118.1 L-108.5 -116.3 L-109.6 -114.4 L-110.6 -112.5 L-111.5 -110.6 L-112.3 -108.6 L-113.0 -106.7 L-113.7 -104.8 L-114.3 -102.8 L-114.8 -100.8 L-115.3 -98.8 L-115.6 -96.9 L-115.9 -94.9 L-116.1 -92.9 L-116.2 -90.9 L-116.3 -88.9 L-116.2 -86.9 L-116.1 -84.9 L-115.9 -82.9 L-115.6 -80.9 L-115.3 -78.9 L-114.8 -76.9 L-114.3 -74.9 L-113.7 -73.0 L-113.0 -71.0 L-112.3 -69.1 L-111.5 -67.2 L-110.6 -65.3 L-109.6 -63.4 L-108.5 -61.5 L-107.4 -59.6 L-106.2 -57.8 L-104.9 -56.0 L-103.6 -54.2 L-102.2 -52.4 L-100.7 -50.7 L-99.1 -48.9 L-97.5 -47.2 L-95.8 -45.6 L-94.1 -43.9 L-92.2 -42.3 L-90.4 -40.8 L-88.4 -39.2 L-86.4 -37.7 L-84.3 -36.3 L-82.2 -34.8 L-80.0 -33.4 L-77.8 -32.1 L-75.5 -30.8 L-73.2 -29.5 L-70.8 -28.2 L-68.3 -27.0 L-65.9 -25.9 L-63.3 -24.8 L-60.7 -23.7 L-58.1 -22.7 L-55.5 -21.7 L-52.8 -20.8 L-50.1 -19.9 L-47.3 -19.1 L-44.5 -18.3 L-41.7 -17.5 L-38.8 -16.8 L-35.9 -16.2 L-33.0 -15.6 L-30.1 -15.1 L-27.1 -14.6 L-24.2 -14.1 L-21.2 -13.7 L-18.2 -13.4 L-15.2 -13.1 L-12.2 -12.9 L-9.1 -12.7 L-6.1 -12.6 L-3.0 -12.5 L-0.0 -12.4 L3.0 -12.5 L6.1 -12.6 L9.1 -12.7 L12.2 -12.9 L15.2 -13.1 L18.2 -13.4 L21.2 -13.7 L24.2 -14.1 L27.1 -14.6 L30.1 -15.1 L33.0 -15.6 L35.9 -16.2 L38.8 -16.8 L41.7 -17.5 L44.5 -18.3 L47.3 -19.1 L50.1 -19.9 L52.8 -20.8 L55.5 -21.7 L58.1 -22.7 L60.7 -23.7 L63.3 -24.8 L65.9 -25.9 L68.3 -27.0 L70.8 -28.2 L73.2 -29.5 L75.5 -30.8 L77.8 -32.1 L80.0 -33.4 L82.2 -34.8 L84.3 -36.3 L86.4 -37.7 L88.4 -39.2 L90.4 -40.8 L92.2 -42.3 L94.1 -43.9 L95.8 -45.6 L97.5 -47.2 L99.1 -48.9 L100.7 -50.7 L102.2 -52.4 L103.6 -54.2 L104.9 -56.0 L106.2 -57.8 L107.4 -59.6 L108.5 -61.5 L109.6 -63.4 L110.6 -65.3 L111.5 -67.2 L112.3 -69.1 L113.0 -71.0 L113.7 -73.0 L114.3 -74.9 L114.8 -76.9 L115.3 -78.9 L115.6 -80.9 L115.9 -82.9 L116.1 -84.9 L116.2 -86.9 L116.3 -88.9 L116.2 -90.9 L116.1 -92.9 L115.9 -94.9 L115.6 -96.9 L115.3 -98.8 L114.8 -100.8 L114.3 -102.8 L113.7 -104.8 L113.0 -106.7 L112.3 -108.6 L111.5 -110.6 L110.6 -112.5 L109.6 -114.4 L108.5 -116.3 L107.4 -118.1 L106.2 -120.0 L104.9 -121.8 L103.6 -123.6 L102.2 -125.3 L100.7 -127.1 L99.1 -128.8 L97.5 -130.5 L95.8 -132.2 L94.1 -133.8 L92.2 -135.4 L90.4 -137.0 L88.4 -138.5 L86.4 -140.0 L84.3 -141.5 L82.2 -142.9 L80.0 -144.3 L77.8 -145.7 L75.5 -147.0 L73.2 -148.3 L70.8 -149.5 L68.3 -150.7 L65.9 -151.8 L67.8 -156.4 L65.7 -157.3 L63.5 -158.3 L61.4 -159.1 L59.2 -160.0 L57.0 -160.8 L54.8 -161.6 L52.6 -162.4 L50.4 -163.1 L48.2 -163.8 L46.0 -164.5 L43.7 -165.1 L41.5 -165.7 L39.2 -166.3 L36.9 -166.8 L34.7 -167.3 L32.4 -167.8 L30.1 -168.2 L27.8 -168.6 L25.5 -169.0 L23.2 -169.3 L20.9 -169.7 L18.6 -169.9 L16.3 -170.2 L13.9 -170.4 L11.6 -170.6 L9.3 -170.7 L7.0 -170.8 L4.7 -170.9 L2.3 -171.0 L0.0 -171.0 L-2.3 -171.0 L-4.7 -170.9 L-7.0 -170.8 L-9.3 -170.7 L-11.6 -170.6 L-13.9 -170.4 L-16.3 -170.2 L-18.6 -169.9 L-20.9 -169.7 L-23.2 -169.3 L-25.5 -169.0 L-27.8 -168.6 L-30.1 -168.2 L-32.4 -167.8 L-34.7 -167.3 L-36.9 -166.8 L-39.2 -166.3 L-41.5 -165.7 L-43.7 -165.1 L-46.0 -164.5 L-48.2 -163.8 L-50.4 -163.1 L-52.6 -162.4 L-54.8 -161.6 L-57.0 -160.8 L-59.2 -160.0 L-61.4 -159.1 L-63.5 -158.3 L-65.7 -157.3 L-67.8 -156.4Z" fill="url(#pg80)"/><path d="M-27.7 -163.6 L-30.4 -163.1 L-33.0 -162.5 L-35.7 -162.0 L-38.3 -161.3 L-40.9 -160.6 L-43.5 -159.9 L-46.0 -159.1 L-48.5 -158.3 L-51.0 -157.5 L-53.5 -156.6 L-55.9 -155.6 L-58.2 -154.6 L-60.6 -153.6 L-62.9 -152.6 L-65.1 -151.5 L-67.3 -150.3 L-69.5 -149.1 L-71.6 -147.9 L-73.6 -146.7 L-75.6 -145.4 L-77.6 -144.1 L-79.5 -142.7 L-81.3 -141.3 L-83.1 -139.9 L-84.8 -138.5 L-86.5 -137.0 L-88.1 -135.5 L-89.7 -134.0 L-91.2 -132.4 L-92.6 -130.8 L-94.0 -129.2 L-95.3 -127.6 L-96.5 -126.0 L-97.7 -124.3 L-98.8 -122.6 L-99.8 -120.9 L-100.8 -119.2 L-101.7 -117.4 L-102.5 -115.7 L-103.3 -113.9 L-104.0 -112.1 L-104.6 -110.3 L-105.1 -108.5 L-105.6 -106.7 L-106.0 -104.9 L-106.4 -103.0 L-106.6 -101.2 L-106.8 -99.4 L-106.9 -97.5 L-106.9 -95.7 L-106.9 -93.8 L-106.8 -92.0 L-106.6 -90.2 L-106.4 -88.3 L-106.0 -86.5 L-105.6 -84.7 L-105.1 -82.9 L-104.6 -81.1 L-104.0 -79.3 L-103.3 -77.5 L-102.5 -75.7 L-101.7 -74.0 L-100.8 -72.2 L-99.8 -70.5 L-98.8 -68.8 L-97.7 -67.1 L-96.5 -65.4 L-95.3 -63.8 L-94.0 -62.1 L-92.6 -60.5 L-91.2 -59.0 L-89.7 -57.4 L-88.1 -55.9 L-86.5 -54.4 L-84.8 -52.9 L-83.1 -51.5 L-81.3 -50.0 L-79.5 -48.7 L-77.6 -47.3 L-75.6 -46.0 L-73.6 -44.7 L-71.6 -43.5 L-69.5 -42.2 L-67.3 -41.1 L-65.1 -39.9 L-62.9 -38.8 L-60.6 -37.8 L-58.2 -36.7 L-55.9 -35.8 L-53.5 -34.8 L-51.0 -33.9 L-48.5 -33.1 L-46.0 -32.2 L-43.5 -31.5 L-40.9 -30.7 L-38.3 -30.1 L-35.7 -29.4 L-33.0 -28.8 L-30.4 -28.3 L-27.7 -27.8 L-25.0 -27.3 L-22.2 -26.9 L-19.5 -26.6 L-16.7 -26.3 L-14.0 -26.0 L-11.2 -25.8 L-8.4 -25.6 L-5.6 -25.5 L-2.8 -25.4 L-0.0 -25.4 L2.8 -25.4 L5.6 -25.5 L8.4 -25.6 L11.2 -25.8 L14.0 -26.0 L16.7 -26.3 L19.5 -26.6 L22.2 -26.9 L25.0 -27.3 L27.7 -27.8 L30.4 -28.3 L33.0 -28.8 L35.7 -29.4 L38.3 -30.1 L40.9 -30.7 L43.5 -31.5 L46.0 -32.2 L48.5 -33.1 L51.0 -33.9 L53.5 -34.8 L55.9 -35.8 L58.2 -36.7 L60.6 -37.8 L62.9 -38.8 L65.1 -39.9 L67.3 -41.1 L69.5 -42.2 L71.6 -43.5 L73.6 -44.7 L75.6 -46.0 L77.6 -47.3 L79.5 -48.7 L81.3 -50.0 L83.1 -51.5 L84.8 -52.9 L86.5 -54.4 L88.1 -55.9 L89.7 -57.4 L91.2 -59.0 L92.6 -60.5 L94.0 -62.1 L95.3 -63.8 L96.5 -65.4 L97.7 -67.1 L98.8 -68.8 L99.8 -70.5 L100.8 -72.2 L101.7 -74.0 L102.5 -75.7 L103.3 -77.5 L104.0 -79.3 L104.6 -81.1 L105.1 -82.9 L105.6 -84.7 L106.0 -86.5 L106.4 -88.3 L106.6 -90.2 L106.8 -92.0 L106.9 -93.8 L106.9 -95.7 L106.9 -97.5 L106.8 -99.4 L106.6 -101.2 L106.4 -103.0 L106.0 -104.9 L105.6 -106.7 L105.1 -108.5 L104.6 -110.3 L104.0 -112.1 L103.3 -113.9 L102.5 -115.7 L101.7 -117.4 L100.8 -119.2 L99.8 -120.9 L98.8 -122.6 L97.7 -124.3 L96.5 -126.0 L95.3 -127.6 L94.0 -129.2 L92.6 -130.8 L91.2 -132.4 L89.7 -134.0 L88.1 -135.5 L86.5 -137.0 L84.8 -138.5 L83.1 -139.9 L81.3 -141.3 L79.5 -142.7 L77.6 -144.1 L75.6 -145.4 L73.6 -146.7 L71.6 -147.9 L69.5 -149.1 L67.3 -150.3 L65.1 -151.5 L62.9 -152.6 L60.6 -153.6 L58.2 -154.6 L55.9 -155.6 L53.5 -156.6 L51.0 -157.5 L48.5 -158.3 L46.0 -159.1 L43.5 -159.9 L40.9 -160.6 L38.3 -161.3 L35.7 -162.0 L33.0 -162.5 L30.4 -163.1 L27.7 -163.6 L28.5 -168.5 L27.6 -168.7 L26.6 -168.8 L25.7 -169.0 L24.7 -169.1 L23.8 -169.3 L22.8 -169.4 L21.9 -169.5 L21.0 -169.6 L20.0 -169.8 L19.1 -169.9 L18.1 -170.0 L17.2 -170.1 L16.2 -170.2 L15.3 -170.3 L14.3 -170.4 L13.4 -170.4 L12.4 -170.5 L11.4 -170.6 L10.5 -170.6 L9.5 -170.7 L8.6 -170.8 L7.6 -170.8 L6.7 -170.8 L5.7 -170.9 L4.8 -170.9 L3.8 -170.9 L2.9 -171.0 L1.9 -171.0 L1.0 -171.0 L-0.0 -171.0 L-1.0 -171.0 L-1.9 -171.0 L-2.9 -171.0 L-3.8 -170.9 L-4.8 -170.9 L-5.7 -170.9 L-6.7 -170.8 L-7.6 -170.8 L-8.6 -170.8 L-9.5 -170.7 L-10.5 -170.6 L-11.4 -170.6 L-12.4 -170.5 L-13.4 -170.4 L-14.3 -170.4 L-15.3 -170.3 L-16.2 -170.2 L-17.2 -170.1 L-18.1 -170.0 L-19.1 -169.9 L-20.0 -169.8 L-21.0 -169.6 L-21.9 -169.5 L-22.8 -169.4 L-23.8 -169.3 L-24.7 -169.1 L-25.7 -169.0 L-26.6 -168.8 L-27.6 -168.7 L-28.5 -168.5Z" fill="url(#pg94)"/><path d="M-0.0 -165.3 L-2.4 -165.3 L-4.9 -165.2 L-7.3 -165.1 L-9.8 -165.0 L-12.2 -164.8 L-14.6 -164.6 L-17.0 -164.3 L-19.4 -164.0 L-21.8 -163.6 L-24.2 -163.2 L-26.6 -162.8 L-28.9 -162.3 L-31.2 -161.8 L-33.5 -161.2 L-35.8 -160.6 L-38.0 -160.0 L-40.2 -159.3 L-42.4 -158.6 L-44.6 -157.9 L-46.7 -157.1 L-48.8 -156.3 L-50.9 -155.4 L-53.0 -154.5 L-55.0 -153.6 L-56.9 -152.6 L-58.8 -151.6 L-60.7 -150.6 L-62.6 -149.5 L-64.4 -148.4 L-66.1 -147.3 L-67.8 -146.2 L-69.5 -145.0 L-71.1 -143.8 L-72.7 -142.5 L-74.2 -141.3 L-75.6 -140.0 L-77.0 -138.7 L-78.4 -137.3 L-79.7 -136.0 L-81.0 -134.6 L-82.2 -133.2 L-83.3 -131.8 L-84.4 -130.3 L-85.4 -128.9 L-86.4 -127.4 L-87.3 -125.9 L-88.1 -124.4 L-88.9 -122.9 L-89.6 -121.3 L-90.3 -119.8 L-90.9 -118.2 L-91.4 -116.6 L-91.9 -115.1 L-92.3 -113.5 L-92.7 -111.9 L-93.0 -110.3 L-93.2 -108.7 L-93.4 -107.1 L-93.5 -105.5 L-93.5 -103.9 L-93.5 -102.3 L-93.4 -100.6 L-93.2 -99.0 L-93.0 -97.4 L-92.7 -95.8 L-92.3 -94.2 L-91.9 -92.7 L-91.4 -91.1 L-90.9 -89.5 L-90.3 -88.0 L-89.6 -86.4 L-88.9 -84.9 L-88.1 -83.3 L-87.3 -81.8 L-86.4 -80.3 L-85.4 -78.9 L-84.4 -77.4 L-83.3 -76.0 L-82.2 -74.5 L-81.0 -73.1 L-79.7 -71.7 L-78.4 -70.4 L-77.0 -69.1 L-75.6 -67.7 L-74.2 -66.4 L-72.7 -65.2 L-71.1 -63.9 L-69.5 -62.7 L-67.8 -61.6 L-66.1 -60.4 L-64.4 -59.3 L-62.6 -58.2 L-60.7 -57.1 L-58.8 -56.1 L-56.9 -55.1 L-55.0 -54.1 L-53.0 -53.2 L-50.9 -52.3 L-48.8 -51.5 L-46.7 -50.6 L-44.6 -49.9 L-42.4 -49.1 L-40.2 -48.4 L-38.0 -47.7 L-35.8 -47.1 L-33.5 -46.5 L-31.2 -45.9 L-28.9 -45.4 L-26.6 -44.9 L-24.2 -44.5 L-21.8 -44.1 L-19.4 -43.7 L-17.0 -43.4 L-14.6 -43.2 L-12.2 -42.9 L-9.8 -42.7 L-7.3 -42.6 L-4.9 -42.5 L-2.4 -42.4 L-0.0 -42.4 L2.4 -42.4 L4.9 -42.5 L7.3 -42.6 L9.8 -42.7 L12.2 -42.9 L14.6 -43.2 L17.0 -43.4 L19.4 -43.7 L21.8 -44.1 L24.2 -44.5 L26.6 -44.9 L28.9 -45.4 L31.2 -45.9 L33.5 -46.5 L35.8 -47.1 L38.0 -47.7 L40.2 -48.4 L42.4 -49.1 L44.6 -49.9 L46.7 -50.6 L48.8 -51.5 L50.9 -52.3 L53.0 -53.2 L55.0 -54.1 L56.9 -55.1 L58.8 -56.1 L60.7 -57.1 L62.6 -58.2 L64.4 -59.3 L66.1 -60.4 L67.8 -61.6 L69.5 -62.7 L71.1 -63.9 L72.7 -65.2 L74.2 -66.4 L75.6 -67.7 L77.0 -69.1 L78.4 -70.4 L79.7 -71.7 L81.0 -73.1 L82.2 -74.5 L83.3 -76.0 L84.4 -77.4 L85.4 -78.9 L86.4 -80.3 L87.3 -81.8 L88.1 -83.3 L88.9 -84.9 L89.6 -86.4 L90.3 -88.0 L90.9 -89.5 L91.4 -91.1 L91.9 -92.7 L92.3 -94.2 L92.7 -95.8 L93.0 -97.4 L93.2 -99.0 L93.4 -100.6 L93.5 -102.3 L93.5 -103.9 L93.5 -105.5 L93.4 -107.1 L93.2 -108.7 L93.0 -110.3 L92.7 -111.9 L92.3 -113.5 L91.9 -115.1 L91.4 -116.6 L90.9 -118.2 L90.3 -119.8 L89.6 -121.3 L88.9 -122.9 L88.1 -124.4 L87.3 -125.9 L86.4 -127.4 L85.4 -128.9 L84.4 -130.3 L83.3 -131.8 L82.2 -133.2 L81.0 -134.6 L79.7 -136.0 L78.4 -137.3 L77.0 -138.7 L75.6 -140.0 L74.2 -141.3 L72.7 -142.5 L71.1 -143.8 L69.5 -145.0 L67.8 -146.2 L66.1 -147.3 L64.4 -148.4 L62.6 -149.5 L60.7 -150.6 L58.8 -151.6 L56.9 -152.6 L55.0 -153.6 L53.0 -154.5 L50.9 -155.4 L48.8 -156.3 L46.7 -157.1 L44.6 -157.9 L42.4 -158.6 L40.2 -159.3 L38.0 -160.0 L35.8 -160.6 L33.5 -161.2 L31.2 -161.8 L28.9 -162.3 L26.6 -162.8 L24.2 -163.2 L21.8 -163.6 L19.4 -164.0 L17.0 -164.3 L14.6 -164.6 L12.2 -164.8 L9.8 -165.0 L7.3 -165.1 L4.9 -165.2 L2.4 -165.3 L0.0 -165.3Z" fill="url(#pg86)"/><path d="M-0.0 -161.6 L-1.9 -161.6 L-3.9 -161.5 L-5.8 -161.5 L-7.7 -161.3 L-9.7 -161.2 L-11.6 -161.0 L-13.5 -160.8 L-15.4 -160.6 L-17.3 -160.3 L-19.2 -160.0 L-21.0 -159.6 L-22.9 -159.2 L-24.7 -158.8 L-26.5 -158.4 L-28.3 -157.9 L-30.1 -157.4 L-31.9 -156.9 L-33.6 -156.3 L-35.3 -155.7 L-37.0 -155.1 L-38.7 -154.4 L-40.3 -153.8 L-41.9 -153.1 L-43.5 -152.3 L-45.0 -151.6 L-46.6 -150.8 L-48.1 -150.0 L-49.5 -149.1 L-50.9 -148.3 L-52.3 -147.4 L-53.7 -146.5 L-55.0 -145.5 L-56.3 -144.6 L-57.5 -143.6 L-58.7 -142.6 L-59.9 -141.6 L-61.0 -140.5 L-62.1 -139.5 L-63.1 -138.4 L-64.1 -137.3 L-65.0 -136.2 L-65.9 -135.1 L-66.8 -133.9 L-67.6 -132.8 L-68.4 -131.6 L-69.1 -130.4 L-69.8 -129.2 L-70.4 -128.0 L-71.0 -126.8 L-71.5 -125.6 L-72.0 -124.3 L-72.4 -123.1 L-72.8 -121.8 L-73.1 -120.6 L-73.4 -119.3 L-73.6 -118.1 L-73.8 -116.8 L-73.9 -115.5 L-74.0 -114.2 L-74.0 -113.0 L-74.0 -111.7 L-73.9 -110.4 L-73.8 -109.2 L-73.6 -107.9 L-73.4 -106.6 L-73.1 -105.4 L-72.8 -104.1 L-72.4 -102.9 L-72.0 -101.6 L-71.5 -100.4 L-71.0 -99.2 L-70.4 -97.9 L-69.8 -96.7 L-69.1 -95.5 L-68.4 -94.4 L-67.6 -93.2 L-66.8 -92.0 L-65.9 -90.9 L-65.0 -89.8 L-64.1 -88.6 L-63.1 -87.6 L-62.1 -86.5 L-61.0 -85.4 L-59.9 -84.4 L-58.7 -83.4 L-57.5 -82.4 L-56.3 -81.4 L-55.0 -80.4 L-53.7 -79.5 L-52.3 -78.6 L-50.9 -77.7 L-49.5 -76.8 L-48.1 -76.0 L-46.6 -75.2 L-45.0 -74.4 L-43.5 -73.6 L-41.9 -72.9 L-40.3 -72.2 L-38.7 -71.5 L-37.0 -70.8 L-35.3 -70.2 L-33.6 -69.6 L-31.9 -69.1 L-30.1 -68.5 L-28.3 -68.0 L-26.5 -67.6 L-24.7 -67.1 L-22.9 -66.7 L-21.0 -66.3 L-19.2 -66.0 L-17.3 -65.7 L-15.4 -65.4 L-13.5 -65.1 L-11.6 -64.9 L-9.7 -64.7 L-7.7 -64.6 L-5.8 -64.5 L-3.9 -64.4 L-1.9 -64.3 L-0.0 -64.3 L1.9 -64.3 L3.9 -64.4 L5.8 -64.5 L7.7 -64.6 L9.7 -64.7 L11.6 -64.9 L13.5 -65.1 L15.4 -65.4 L17.3 -65.7 L19.2 -66.0 L21.0 -66.3 L22.9 -66.7 L24.7 -67.1 L26.5 -67.6 L28.3 -68.0 L30.1 -68.5 L31.9 -69.1 L33.6 -69.6 L35.3 -70.2 L37.0 -70.8 L38.7 -71.5 L40.3 -72.2 L41.9 -72.9 L43.5 -73.6 L45.0 -74.4 L46.6 -75.2 L48.1 -76.0 L49.5 -76.8 L50.9 -77.7 L52.3 -78.6 L53.7 -79.5 L55.0 -80.4 L56.3 -81.4 L57.5 -82.4 L58.7 -83.4 L59.9 -84.4 L61.0 -85.4 L62.1 -86.5 L63.1 -87.6 L64.1 -88.6 L65.0 -89.8 L65.9 -90.9 L66.8 -92.0 L67.6 -93.2 L68.4 -94.4 L69.1 -95.5 L69.8 -96.7 L70.4 -97.9 L71.0 -99.2 L71.5 -100.4 L72.0 -101.6 L72.4 -102.9 L72.8 -104.1 L73.1 -105.4 L73.4 -106.6 L73.6 -107.9 L73.8 -109.2 L73.9 -110.4 L74.0 -111.7 L74.0 -113.0 L74.0 -114.2 L73.9 -115.5 L73.8 -116.8 L73.6 -118.1 L73.4 -119.3 L73.1 -120.6 L72.8 -121.8 L72.4 -123.1 L72.0 -124.3 L71.5 -125.6 L71.0 -126.8 L70.4 -128.0 L69.8 -129.2 L69.1 -130.4 L68.4 -131.6 L67.6 -132.8 L66.8 -133.9 L65.9 -135.1 L65.0 -136.2 L64.1 -137.3 L63.1 -138.4 L62.1 -139.5 L61.0 -140.5 L59.9 -141.6 L58.7 -142.6 L57.5 -143.6 L56.3 -144.6 L55.0 -145.5 L53.7 -146.5 L52.3 -147.4 L50.9 -148.3 L49.5 -149.1 L48.1 -150.0 L46.6 -150.8 L45.0 -151.6 L43.5 -152.3 L41.9 -153.1 L40.3 -153.8 L38.7 -154.4 L37.0 -155.1 L35.3 -155.7 L33.6 -156.3 L31.9 -156.9 L30.1 -157.4 L28.3 -157.9 L26.5 -158.4 L24.7 -158.8 L22.9 -159.2 L21.0 -159.6 L19.2 -160.0 L17.3 -160.3 L15.4 -160.6 L13.5 -160.8 L11.6 -161.0 L9.7 -161.2 L7.7 -161.3 L5.8 -161.5 L3.9 -161.5 L1.9 -161.6 L0.0 -161.6Z" fill="url(#pg77)"/><path d="M-0.0 -153.7 L-1.3 -153.7 L-2.6 -153.6 L-4.0 -153.6 L-5.3 -153.5 L-6.6 -153.4 L-7.9 -153.3 L-9.2 -153.1 L-10.5 -153.0 L-11.8 -152.8 L-13.0 -152.6 L-14.3 -152.3 L-15.6 -152.1 L-16.8 -151.8 L-18.1 -151.5 L-19.3 -151.2 L-20.5 -150.8 L-21.7 -150.5 L-22.9 -150.1 L-24.0 -149.7 L-25.2 -149.3 L-26.3 -148.8 L-27.4 -148.4 L-28.5 -147.9 L-29.6 -147.4 L-30.7 -146.9 L-31.7 -146.3 L-32.7 -145.8 L-33.7 -145.2 L-34.7 -144.6 L-35.6 -144.0 L-36.5 -143.4 L-37.4 -142.7 L-38.3 -142.1 L-39.1 -141.4 L-40.0 -140.7 L-40.8 -140.0 L-41.5 -139.3 L-42.2 -138.6 L-42.9 -137.9 L-43.6 -137.1 L-44.3 -136.4 L-44.9 -135.6 L-45.5 -134.8 L-46.0 -134.1 L-46.5 -133.3 L-47.0 -132.5 L-47.5 -131.6 L-47.9 -130.8 L-48.3 -130.0 L-48.7 -129.2 L-49.0 -128.3 L-49.3 -127.5 L-49.5 -126.6 L-49.7 -125.8 L-49.9 -124.9 L-50.1 -124.0 L-50.2 -123.2 L-50.3 -122.3 L-50.4 -121.5 L-50.4 -120.6 L-50.4 -119.7 L-50.3 -118.9 L-50.2 -118.0 L-50.1 -117.1 L-49.9 -116.3 L-49.7 -115.4 L-49.5 -114.6 L-49.3 -113.7 L-49.0 -112.9 L-48.7 -112.0 L-48.3 -111.2 L-47.9 -110.4 L-47.5 -109.5 L-47.0 -108.7 L-46.5 -107.9 L-46.0 -107.1 L-45.5 -106.3 L-44.9 -105.6 L-44.3 -104.8 L-43.6 -104.0 L-42.9 -103.3 L-42.2 -102.6 L-41.5 -101.8 L-40.8 -101.1 L-40.0 -100.4 L-39.1 -99.7 L-38.3 -99.1 L-37.4 -98.4 L-36.5 -97.8 L-35.6 -97.2 L-34.7 -96.6 L-33.7 -96.0 L-32.7 -95.4 L-31.7 -94.9 L-30.7 -94.3 L-29.6 -93.8 L-28.5 -93.3 L-27.4 -92.8 L-26.3 -92.4 L-25.2 -91.9 L-24.0 -91.5 L-22.9 -91.1 L-21.7 -90.7 L-20.5 -90.3 L-19.3 -90.0 L-18.1 -89.7 L-16.8 -89.4 L-15.6 -89.1 L-14.3 -88.8 L-13.0 -88.6 L-11.8 -88.4 L-10.5 -88.2 L-9.2 -88.0 L-7.9 -87.9 L-6.6 -87.8 L-5.3 -87.7 L-4.0 -87.6 L-2.6 -87.5 L-1.3 -87.5 L-0.0 -87.5 L1.3 -87.5 L2.6 -87.5 L4.0 -87.6 L5.3 -87.7 L6.6 -87.8 L7.9 -87.9 L9.2 -88.0 L10.5 -88.2 L11.8 -88.4 L13.0 -88.6 L14.3 -88.8 L15.6 -89.1 L16.8 -89.4 L18.1 -89.7 L19.3 -90.0 L20.5 -90.3 L21.7 -90.7 L22.9 -91.1 L24.0 -91.5 L25.2 -91.9 L26.3 -92.4 L27.4 -92.8 L28.5 -93.3 L29.6 -93.8 L30.7 -94.3 L31.7 -94.9 L32.7 -95.4 L33.7 -96.0 L34.7 -96.6 L35.6 -97.2 L36.5 -97.8 L37.4 -98.4 L38.3 -99.1 L39.1 -99.7 L40.0 -100.4 L40.8 -101.1 L41.5 -101.8 L42.2 -102.6 L42.9 -103.3 L43.6 -104.0 L44.3 -104.8 L44.9 -105.6 L45.5 -106.3 L46.0 -107.1 L46.5 -107.9 L47.0 -108.7 L47.5 -109.5 L47.9 -110.4 L48.3 -111.2 L48.7 -112.0 L49.0 -112.9 L49.3 -113.7 L49.5 -114.6 L49.7 -115.4 L49.9 -116.3 L50.1 -117.1 L50.2 -118.0 L50.3 -118.9 L50.4 -119.7 L50.4 -120.6 L50.4 -121.5 L50.3 -122.3 L50.2 -123.2 L50.1 -124.0 L49.9 -124.9 L49.7 -125.8 L49.5 -126.6 L49.3 -127.5 L49.0 -128.3 L48.7 -129.2 L48.3 -130.0 L47.9 -130.8 L47.5 -131.6 L47.0 -132.5 L46.5 -133.3 L46.0 -134.1 L45.5 -134.8 L44.9 -135.6 L44.3 -136.4 L43.6 -137.1 L42.9 -137.9 L42.2 -138.6 L41.5 -139.3 L40.8 -140.0 L40.0 -140.7 L39.1 -141.4 L38.3 -142.1 L37.4 -142.7 L36.5 -143.4 L35.6 -144.0 L34.7 -144.6 L33.7 -145.2 L32.7 -145.8 L31.7 -146.3 L30.7 -146.9 L29.6 -147.4 L28.5 -147.9 L27.4 -148.4 L26.3 -148.8 L25.2 -149.3 L24.0 -149.7 L22.9 -150.1 L21.7 -150.5 L20.5 -150.8 L19.3 -151.2 L18.1 -151.5 L16.8 -151.8 L15.6 -152.1 L14.3 -152.3 L13.0 -152.6 L11.8 -152.8 L10.5 -153.0 L9.2 -153.1 L7.9 -153.3 L6.6 -153.4 L5.3 -153.5 L4.0 -153.6 L2.6 -153.6 L1.3 -153.7 L0.0 -153.7Z" fill="url(#pg84)"/><path d="M-0.0 -143.5 L-0.7 -143.5 L-1.5 -143.4 L-2.2 -143.4 L-3.0 -143.4 L-3.7 -143.3 L-4.4 -143.2 L-5.2 -143.2 L-5.9 -143.1 L-6.6 -143.0 L-7.3 -142.8 L-8.0 -142.7 L-8.7 -142.6 L-9.4 -142.4 L-10.1 -142.2 L-10.8 -142.1 L-11.5 -141.9 L-12.2 -141.7 L-12.9 -141.4 L-13.5 -141.2 L-14.2 -141.0 L-14.8 -140.7 L-15.4 -140.5 L-16.0 -140.2 L-16.6 -139.9 L-17.2 -139.6 L-17.8 -139.3 L-18.4 -139.0 L-18.9 -138.7 L-19.5 -138.4 L-20.0 -138.0 L-20.5 -137.7 L-21.0 -137.3 L-21.5 -136.9 L-22.0 -136.6 L-22.5 -136.2 L-22.9 -135.8 L-23.3 -135.4 L-23.7 -135.0 L-24.1 -134.6 L-24.5 -134.2 L-24.9 -133.7 L-25.2 -133.3 L-25.5 -132.9 L-25.9 -132.4 L-26.2 -132.0 L-26.4 -131.5 L-26.7 -131.1 L-26.9 -130.6 L-27.1 -130.1 L-27.3 -129.7 L-27.5 -129.2 L-27.7 -128.7 L-27.8 -128.3 L-28.0 -127.8 L-28.1 -127.3 L-28.1 -126.8 L-28.2 -126.3 L-28.3 -125.8 L-28.3 -125.4 L-28.3 -124.9 L-28.3 -124.4 L-28.3 -123.9 L-28.2 -123.4 L-28.1 -122.9 L-28.1 -122.4 L-28.0 -122.0 L-27.8 -121.5 L-27.7 -121.0 L-27.5 -120.5 L-27.3 -120.0 L-27.1 -119.6 L-26.9 -119.1 L-26.7 -118.7 L-26.4 -118.2 L-26.2 -117.7 L-25.9 -117.3 L-25.5 -116.9 L-25.2 -116.4 L-24.9 -116.0 L-24.5 -115.6 L-24.1 -115.1 L-23.7 -114.7 L-23.3 -114.3 L-22.9 -113.9 L-22.5 -113.5 L-22.0 -113.2 L-21.5 -112.8 L-21.0 -112.4 L-20.5 -112.1 L-20.0 -111.7 L-19.5 -111.4 L-18.9 -111.0 L-18.4 -110.7 L-17.8 -110.4 L-17.2 -110.1 L-16.6 -109.8 L-16.0 -109.5 L-15.4 -109.3 L-14.8 -109.0 L-14.2 -108.8 L-13.5 -108.5 L-12.9 -108.3 L-12.2 -108.1 L-11.5 -107.9 L-10.8 -107.7 L-10.1 -107.5 L-9.4 -107.3 L-8.7 -107.2 L-8.0 -107.0 L-7.3 -106.9 L-6.6 -106.8 L-5.9 -106.7 L-5.2 -106.6 L-4.4 -106.5 L-3.7 -106.4 L-3.0 -106.4 L-2.2 -106.3 L-1.5 -106.3 L-0.7 -106.3 L-0.0 -106.3 L0.7 -106.3 L1.5 -106.3 L2.2 -106.3 L3.0 -106.4 L3.7 -106.4 L4.4 -106.5 L5.2 -106.6 L5.9 -106.7 L6.6 -106.8 L7.3 -106.9 L8.0 -107.0 L8.7 -107.2 L9.4 -107.3 L10.1 -107.5 L10.8 -107.7 L11.5 -107.9 L12.2 -108.1 L12.9 -108.3 L13.5 -108.5 L14.2 -108.8 L14.8 -109.0 L15.4 -109.3 L16.0 -109.5 L16.6 -109.8 L17.2 -110.1 L17.8 -110.4 L18.4 -110.7 L18.9 -111.0 L19.5 -111.4 L20.0 -111.7 L20.5 -112.1 L21.0 -112.4 L21.5 -112.8 L22.0 -113.2 L22.5 -113.5 L22.9 -113.9 L23.3 -114.3 L23.7 -114.7 L24.1 -115.1 L24.5 -115.6 L24.9 -116.0 L25.2 -116.4 L25.5 -116.9 L25.9 -117.3 L26.2 -117.7 L26.4 -118.2 L26.7 -118.7 L26.9 -119.1 L27.1 -119.6 L27.3 -120.0 L27.5 -120.5 L27.7 -121.0 L27.8 -121.5 L28.0 -122.0 L28.1 -122.4 L28.1 -122.9 L28.2 -123.4 L28.3 -123.9 L28.3 -124.4 L28.3 -124.9 L28.3 -125.4 L28.3 -125.8 L28.2 -126.3 L28.1 -126.8 L28.1 -127.3 L28.0 -127.8 L27.8 -128.3 L27.7 -128.7 L27.5 -129.2 L27.3 -129.7 L27.1 -130.1 L26.9 -130.6 L26.7 -131.1 L26.4 -131.5 L26.2 -132.0 L25.9 -132.4 L25.5 -132.9 L25.2 -133.3 L24.9 -133.7 L24.5 -134.2 L24.1 -134.6 L23.7 -135.0 L23.3 -135.4 L22.9 -135.8 L22.5 -136.2 L22.0 -136.6 L21.5 -136.9 L21.0 -137.3 L20.5 -137.7 L20.0 -138.0 L19.5 -138.4 L18.9 -138.7 L18.4 -139.0 L17.8 -139.3 L17.2 -139.6 L16.6 -139.9 L16.0 -140.2 L15.4 -140.5 L14.8 -140.7 L14.2 -141.0 L13.5 -141.2 L12.9 -141.4 L12.2 -141.7 L11.5 -141.9 L10.8 -142.1 L10.1 -142.2 L9.4 -142.4 L8.7 -142.6 L8.0 -142.7 L7.3 -142.8 L6.6 -143.0 L5.9 -143.1 L5.2 -143.2 L4.4 -143.2 L3.7 -143.3 L3.0 -143.4 L2.2 -143.4 L1.5 -143.4 L0.7 -143.5 L0.0 -143.5Z" fill="url(#pg90)"/><path d="M-0.0 -135.6 L-0.4 -135.6 L-0.7 -135.6 L-1.1 -135.6 L-1.5 -135.6 L-1.9 -135.6 L-2.2 -135.5 L-2.6 -135.5 L-3.0 -135.4 L-3.3 -135.4 L-3.7 -135.3 L-4.0 -135.3 L-4.4 -135.2 L-4.7 -135.1 L-5.1 -135.0 L-5.4 -134.9 L-5.8 -134.8 L-6.1 -134.7 L-6.4 -134.6 L-6.8 -134.5 L-7.1 -134.4 L-7.4 -134.3 L-7.7 -134.1 L-8.0 -134.0 L-8.4 -133.9 L-8.6 -133.7 L-8.9 -133.6 L-9.2 -133.4 L-9.5 -133.2 L-9.8 -133.1 L-10.0 -132.9 L-10.3 -132.7 L-10.6 -132.6 L-10.8 -132.4 L-11.0 -132.2 L-11.3 -132.0 L-11.5 -131.8 L-11.7 -131.6 L-11.9 -131.4 L-12.1 -131.2 L-12.3 -131.0 L-12.5 -130.8 L-12.7 -130.5 L-12.8 -130.3 L-13.0 -130.1 L-13.1 -129.9 L-13.3 -129.7 L-13.4 -129.4 L-13.5 -129.2 L-13.6 -129.0 L-13.7 -128.7 L-13.8 -128.5 L-13.9 -128.2 L-14.0 -128.0 L-14.0 -127.8 L-14.1 -127.5 L-14.1 -127.3 L-14.2 -127.0 L-14.2 -126.8 L-14.2 -126.6 L-14.2 -126.3 L-14.2 -126.1 L-14.2 -125.8 L-14.2 -125.6 L-14.1 -125.3 L-14.1 -125.1 L-14.0 -124.8 L-14.0 -124.6 L-13.9 -124.4 L-13.8 -124.1 L-13.7 -123.9 L-13.6 -123.7 L-13.5 -123.4 L-13.4 -123.2 L-13.3 -123.0 L-13.1 -122.7 L-13.0 -122.5 L-12.8 -122.3 L-12.7 -122.1 L-12.5 -121.9 L-12.3 -121.6 L-12.1 -121.4 L-11.9 -121.2 L-11.7 -121.0 L-11.5 -120.8 L-11.3 -120.6 L-11.0 -120.4 L-10.8 -120.2 L-10.6 -120.1 L-10.3 -119.9 L-10.0 -119.7 L-9.8 -119.5 L-9.5 -119.4 L-9.2 -119.2 L-8.9 -119.1 L-8.6 -118.9 L-8.4 -118.8 L-8.0 -118.6 L-7.7 -118.5 L-7.4 -118.3 L-7.1 -118.2 L-6.8 -118.1 L-6.4 -118.0 L-6.1 -117.9 L-5.8 -117.8 L-5.4 -117.7 L-5.1 -117.6 L-4.7 -117.5 L-4.4 -117.4 L-4.0 -117.4 L-3.7 -117.3 L-3.3 -117.2 L-3.0 -117.2 L-2.6 -117.1 L-2.2 -117.1 L-1.9 -117.0 L-1.5 -117.0 L-1.1 -117.0 L-0.7 -117.0 L-0.4 -117.0 L-0.0 -117.0 L0.4 -117.0 L0.7 -117.0 L1.1 -117.0 L1.5 -117.0 L1.9 -117.0 L2.2 -117.1 L2.6 -117.1 L3.0 -117.2 L3.3 -117.2 L3.7 -117.3 L4.0 -117.4 L4.4 -117.4 L4.7 -117.5 L5.1 -117.6 L5.4 -117.7 L5.8 -117.8 L6.1 -117.9 L6.4 -118.0 L6.8 -118.1 L7.1 -118.2 L7.4 -118.3 L7.7 -118.5 L8.0 -118.6 L8.4 -118.8 L8.6 -118.9 L8.9 -119.1 L9.2 -119.2 L9.5 -119.4 L9.8 -119.5 L10.0 -119.7 L10.3 -119.9 L10.6 -120.1 L10.8 -120.2 L11.0 -120.4 L11.3 -120.6 L11.5 -120.8 L11.7 -121.0 L11.9 -121.2 L12.1 -121.4 L12.3 -121.6 L12.5 -121.9 L12.7 -122.1 L12.8 -122.3 L13.0 -122.5 L13.1 -122.7 L13.3 -123.0 L13.4 -123.2 L13.5 -123.4 L13.6 -123.7 L13.7 -123.9 L13.8 -124.1 L13.9 -124.4 L14.0 -124.6 L14.0 -124.8 L14.1 -125.1 L14.1 -125.3 L14.2 -125.6 L14.2 -125.8 L14.2 -126.1 L14.2 -126.3 L14.2 -126.6 L14.2 -126.8 L14.2 -127.0 L14.1 -127.3 L14.1 -127.5 L14.0 -127.8 L14.0 -128.0 L13.9 -128.2 L13.8 -128.5 L13.7 -128.7 L13.6 -129.0 L13.5 -129.2 L13.4 -129.4 L13.3 -129.7 L13.1 -129.9 L13.0 -130.1 L12.8 -130.3 L12.7 -130.5 L12.5 -130.8 L12.3 -131.0 L12.1 -131.2 L11.9 -131.4 L11.7 -131.6 L11.5 -131.8 L11.3 -132.0 L11.0 -132.2 L10.8 -132.4 L10.6 -132.6 L10.3 -132.7 L10.0 -132.9 L9.8 -133.1 L9.5 -133.2 L9.2 -133.4 L8.9 -133.6 L8.6 -133.7 L8.4 -133.9 L8.0 -134.0 L7.7 -134.1 L7.4 -134.3 L7.1 -134.4 L6.8 -134.5 L6.4 -134.6 L6.1 -134.7 L5.8 -134.8 L5.4 -134.9 L5.1 -135.0 L4.7 -135.1 L4.4 -135.2 L4.0 -135.3 L3.7 -135.3 L3.3 -135.4 L3.0 -135.4 L2.6 -135.5 L2.2 -135.5 L1.9 -135.6 L1.5 -135.6 L1.1 -135.6 L0.7 -135.6 L0.4 -135.6 L0.0 -135.6Z" fill="url(#pg104)"/><path d="M8.4 -107.1 L27.6 -120.7 L19.2 -138.5 L-8.4 -142.6 L-27.6 -129.0 L-19.2 -111.2Z" fill="none" stroke="#7c7c7c" stroke-width="3" stroke-linejoin="round" opacity=".4"/><path d="M4.2 -117.4 L13.9 -124.2 L9.7 -133.2 L-4.2 -135.2 L-13.9 -128.4 L-9.7 -119.5Z" fill="none" stroke="#858585" stroke-width="2" stroke-linejoin="round" opacity=".4"/></g>
<ellipse rx="163.0" ry="166.0" fill="url(#pEdge)"/><ellipse rx="163.0" ry="166.0" fill="url(#pBot)"/></g></g>
<g clip-path="url(#cPlanetS)" opacity=".74"><g transform="translate(910.9,507.2) rotate(12.7) scale(1,0.5231)"><g clip-path="url(#cFront)"><g mask="url(#mHole2)"><g filter="url(#fb1)"><circle cx="0.00" cy="0.00" r="364.12" fill="url(#gFade_1006)" /><circle cx="0.00" cy="0.00" r="359.80" fill="url(#gAo_991)" /><circle cx="0.00" cy="0.00" r="353.32" fill="url(#gEn_980)" /><circle cx="0.00" cy="0.00" r="351.88" fill="url(#gA_972)" /><circle cx="0.00" cy="0.00" r="347.57" fill="url(#gA_961)" /><circle cx="0.00" cy="0.00" r="344.33" fill="url(#gA_936)" /><circle cx="0.00" cy="0.00" r="329.22" fill="url(#gA2_896)" /><circle cx="3.90" cy="-1.68" r="316.08" fill="url(#gCa_870)" /><circle cx="3.90" cy="-1.68" r="310.15" fill="url(#gB1_831)" /><circle cx="1.95" cy="-0.84" r="287.84" fill="url(#gB2_770)" /><circle cx="0.00" cy="0.00" r="266.25" fill="url(#gB3_722)" /><circle cx="-1.95" cy="0.84" r="253.66" fill="url(#gB4_695)" /><circle cx="-2.93" cy="1.26" r="246.46" fill="url(#gC_662)" /><circle cx="-1.95" cy="0.84" r="230.27" fill="url(#gC2_611)" /><circle cx="0.00" cy="0.00" r="209.76" fill="url(#gD_541)" /><circle cx="0.00" cy="0.00" r="179.90" fill="url(#gIn_450)" /></g></g></g></g>
<g clip-path="url(#cShadow)"><g transform="translate(910.9,507.2) rotate(12.7) scale(1,0.5231)"><g clip-path="url(#cFront)"><g mask="url(#mHole2)"><circle cx="0.00" cy="0.00" r="359.80" fill="#505050" /><circle cx="0.00" cy="0.00" r="353.32" fill="#9a9a9a" /><circle cx="0.00" cy="0.00" r="351.88" fill="#525252" /><circle cx="0.00" cy="0.00" r="347.57" fill="#525252" /><circle cx="0.00" cy="0.00" r="344.33" fill="#525252" /><circle cx="0.00" cy="0.00" r="329.22" fill="#555555" /><circle cx="3.90" cy="-1.68" r="316.08" fill="#858585" /><circle cx="3.90" cy="-1.68" r="310.15" fill="#565656" /><circle cx="1.95" cy="-0.84" r="287.84" fill="#5a5a5a" /><circle cx="0.00" cy="0.00" r="266.25" fill="#616161" /><circle cx="-1.95" cy="0.84" r="253.66" fill="#707070" /><circle cx="-2.93" cy="1.26" r="246.46" fill="#c2c2c2" /><circle cx="-1.95" cy="0.84" r="230.27" fill="#cccccc" /><circle cx="0.00" cy="0.00" r="209.76" fill="#d9d9d9" /><circle cx="0.00" cy="0.00" r="179.90" fill="#dedede" /></g></g></g></g></g>
<g fill="none" stroke="#4b1a66" stroke-width="1.5" stroke-linecap="round" stroke-linejoin="round">
<path d="M556.6 344.4 L742 460"/>
<path d="M598 363.3 Q613 353 629 345"/>
<path d="M634 385 Q646 377 658 370.5"/>
<path d="M690 417.6 Q698 411.5 707 406"/>
<path d="M700.5 425.5 Q706 417.5 717.5 413"/>
<g stroke-width="1.2"><path d="M567.8 565 Q585 554 601.7 544.3 M594.2 543.6 L601.7 544.3 L599.9 551.1"/>
<path d="M654.3 623.6 Q668 611 689.3 592.2 M681 592.7 L689.3 592.2 L689.6 601"/></g>
</g>
<g><text x="574.5" y="335" font-family="Liberation Sans,sans-serif" font-style="normal" font-size="15.5" fill="#4b1a66">G</text><text x="596" y="349" font-family="Liberation Sans,sans-serif" font-style="normal" font-size="14.5" fill="#4b1a66">F</text><text x="626.5" y="373.3" font-family="Liberation Sans,sans-serif" font-style="normal" font-size="16" fill="#4b1a66" transform="rotate(8 626.5 373.3)">A</text><text x="669.5" y="398.6" font-family="Liberation Sans,sans-serif" font-style="normal" font-size="16" fill="#4b1a66" transform="rotate(5 669.5 398.6)">B</text><text x="709" y="430.8" font-family="Liberation Sans,sans-serif" font-style="normal" font-size="14.5" fill="#4b1a66" transform="rotate(10 709 430.8)">C</text><text x="729.5" y="444" font-family="Liberation Sans,sans-serif" font-style="normal" font-size="14.5" fill="#4b1a66" transform="rotate(8 729.5 444)">D</text>
<text x="499.4" y="573" font-family="Liberation Sans,sans-serif" font-style="italic" font-size="14.5" fill="#4b1a66" textLength="68" lengthAdjust="spacingAndGlyphs">Enke division</text><text x="571.5" y="637.2" font-family="Liberation Sans,sans-serif" font-style="italic" font-size="14.5" fill="#4b1a66" textLength="83" lengthAdjust="spacingAndGlyphs">Cassini division</text></g>
</svg>
</main><aside id="callouts">
<svg class="a" style="left:190px;top:420px" width="165" height="42" viewBox="190 420 165 42"><path d="M196.2 426 H332.5 L347.4 440.4 L332.5 454.8 H196.2 Z" fill="#7030a0"/></svg>
<span class="t " style="left:232.9px;top:432.3px;font:400 16.5px/1 'Liberation Sans',sans-serif;color:#fff;letter-spacing:0.165px;">Page list</span>
<svg class="a" style="left:0px;top:608px;filter:drop-shadow(0 2px 2px rgba(0,0,0,.3))" width="200" height="56" viewBox="0 608 200 56"><path d="M6 615.4 H170 L190 635.3 L170 655.2 H6 Z" fill="#7030a0"/></svg>
<span class="t " style="left:34.3px;top:628.2px;font:400 15.5px/1 'Liberation Sans',sans-serif;color:#fff;letter-spacing:0.169px;">Navigation pane</span>
</aside>
<div class="a" id="frame"></div>
</body></html>
